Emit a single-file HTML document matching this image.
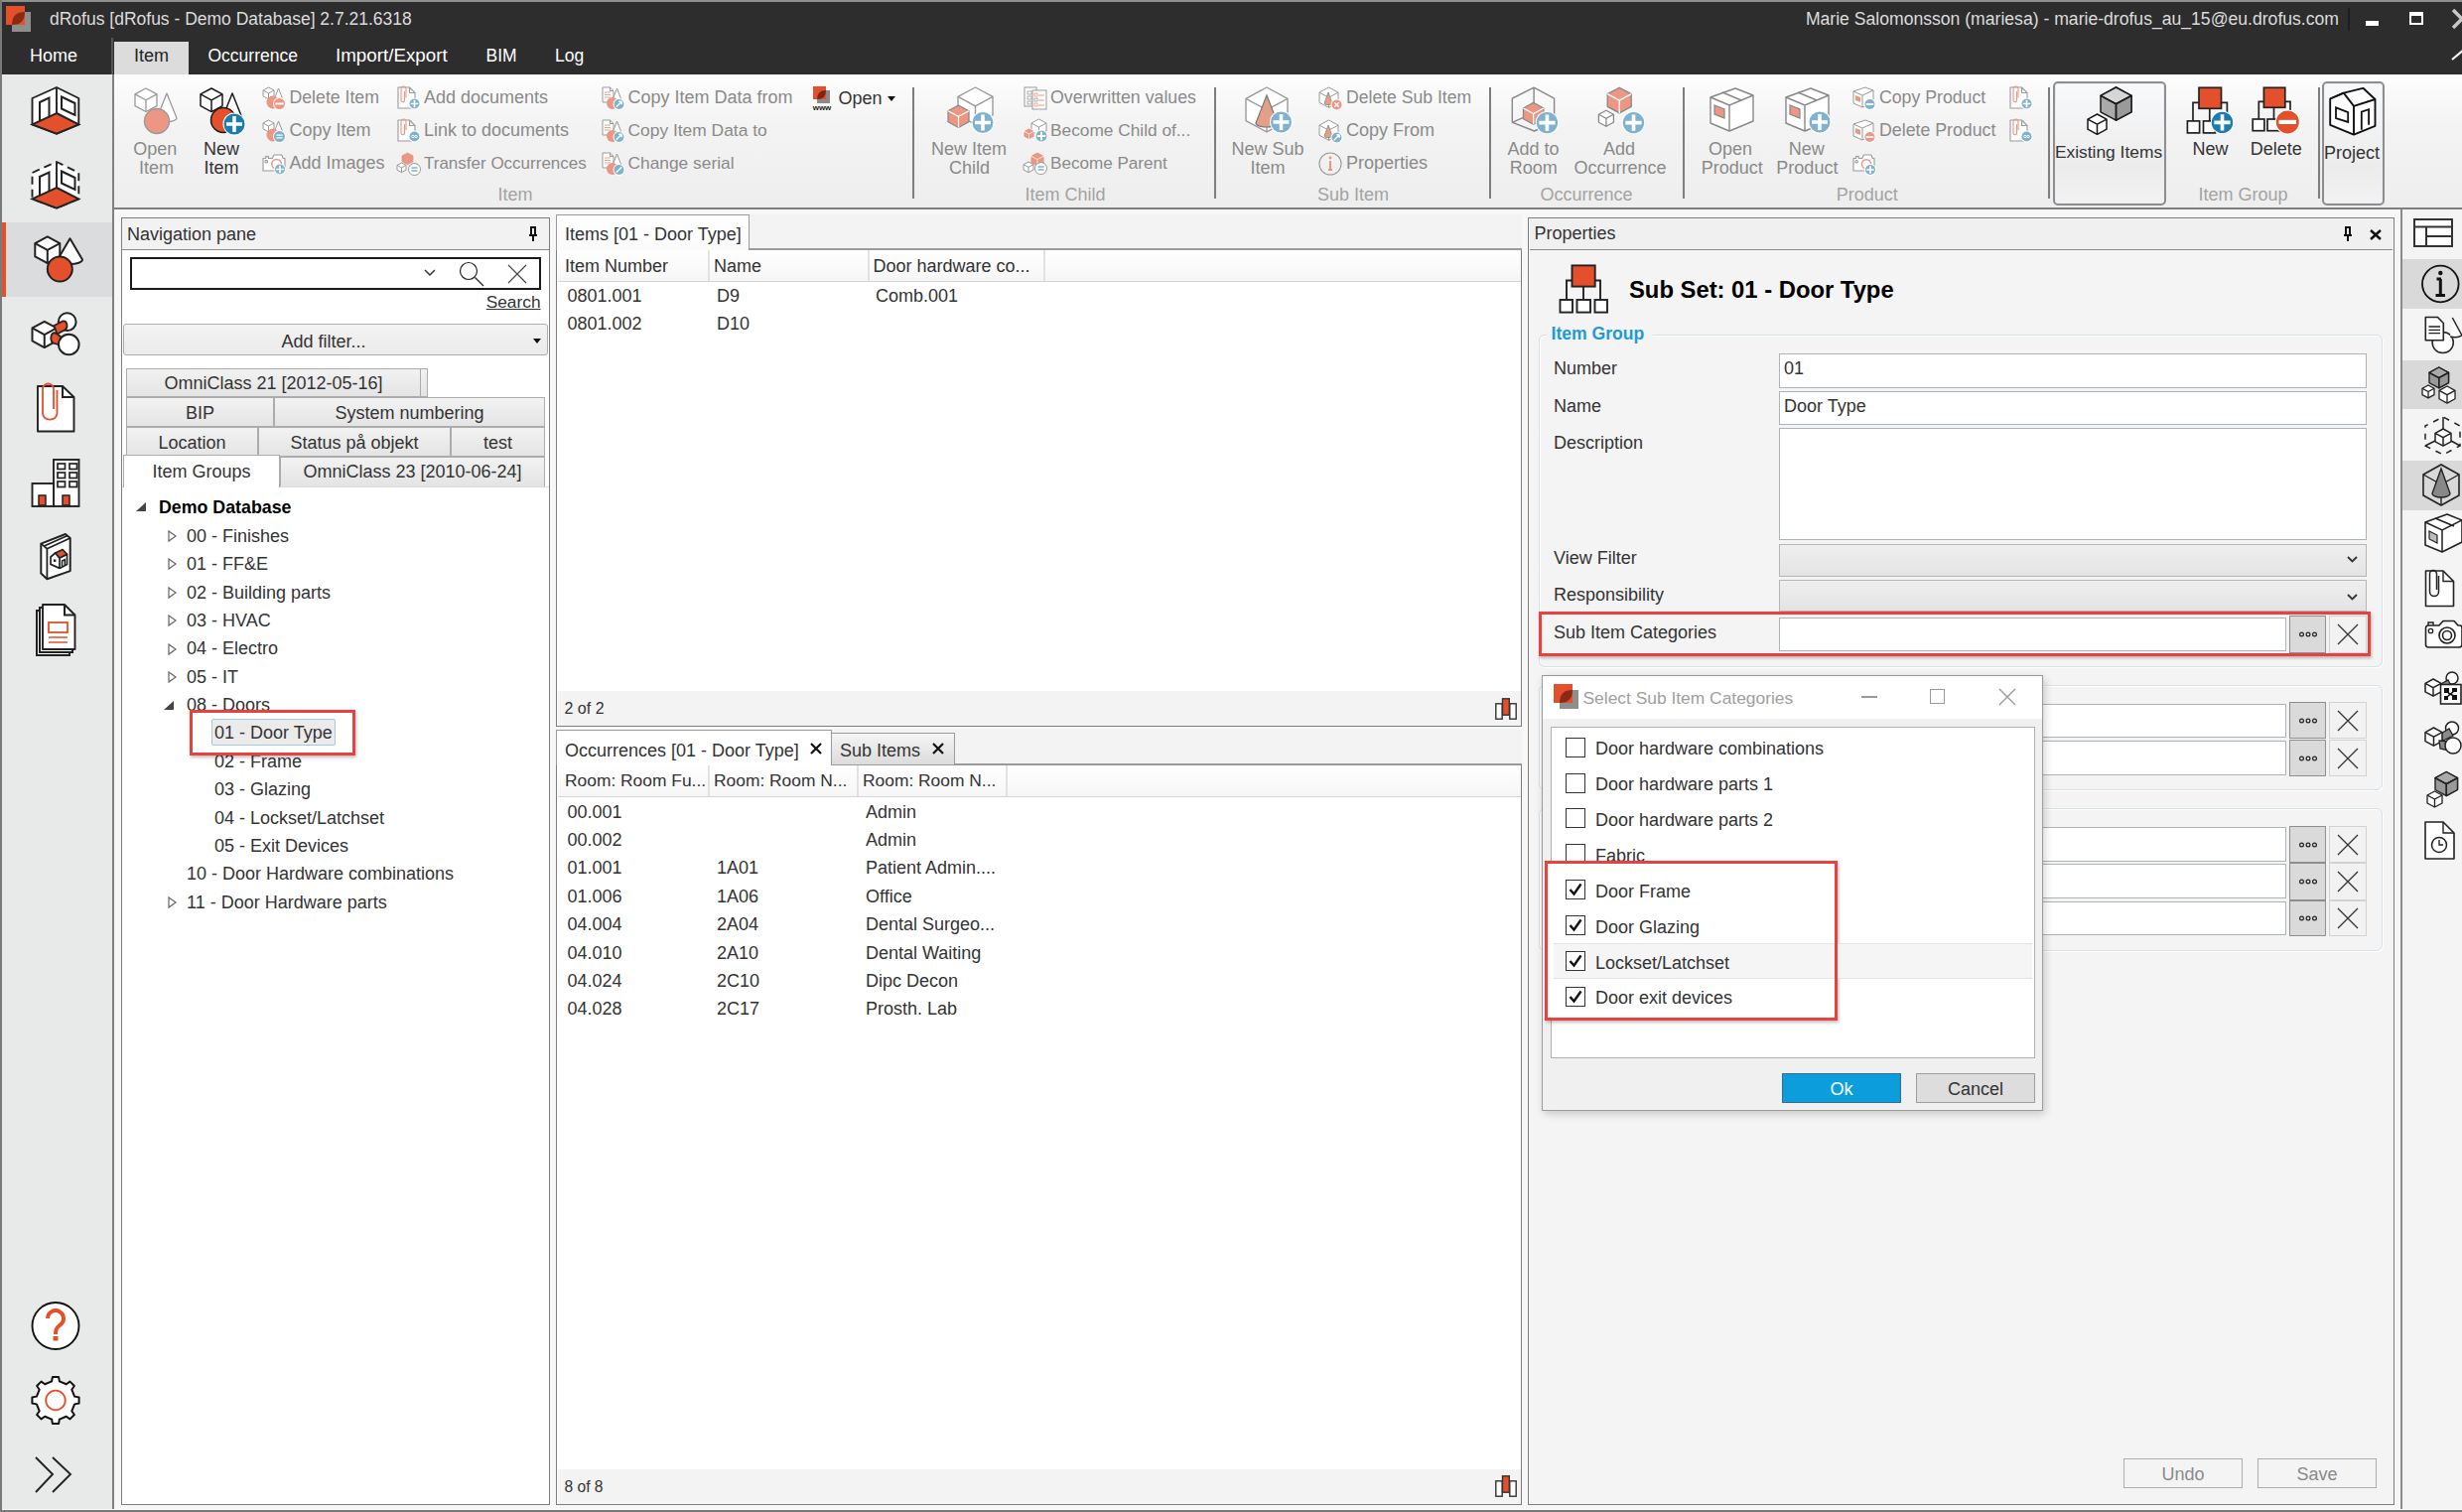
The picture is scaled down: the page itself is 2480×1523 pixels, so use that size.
<!DOCTYPE html><html><head><meta charset="utf-8"><style>
html,body{margin:0;padding:0;}
body{width:2480px;height:1523px;position:relative;overflow:hidden;background:#f7f7f7;font-family:"Liberation Sans",sans-serif;}
.t{position:absolute;white-space:pre;font-family:"Liberation Sans",sans-serif;}
.r{position:absolute;box-sizing:border-box;}
svg.r{overflow:visible;}
</style></head><body>
<div class="r" style="left:0px;top:0px;width:2480px;height:75px;background:#2d2d2d;"></div>
<div class="r" style="left:0px;top:0px;width:2480px;height:2px;background:#8f8f8f;"></div>
<div class="r" style="left:0px;top:0px;width:2px;height:1523px;background:#7a7a7a;"></div>
<div class="r" style="left:0px;top:1521px;width:2480px;height:2px;background:#7a7a7a;"></div>
<div class="r" style="left:12px;top:12px;width:19px;height:20px;background:#8e8e8e;"></div>
<div class="r" style="left:6px;top:6px;width:19px;height:19px;background:#e4502b;"></div>
<svg class="r" style="left:12px;top:12px" width="13" height="13" viewBox="0 0 13 13"><path d="M0 13 Q0 0 13 0 Q13 13 0 13 Z" fill="#8a2a14"/></svg>
<div class="t" style="left:50.0px;top:10.2px;font-size:17.5px;line-height:19.55px;color:#dcdcdc;font-weight:400;">dRofus [dRofus - Demo Database] 2.7.21.6318</div>
<div class="t" style="left:1356.0px;width:1000px;text-align:right;top:10.1px;font-size:17.6px;line-height:19.66px;color:#dcdcdc;font-weight:400;">Marie Salomonsson (mariesa) - marie-drofus_au_15@eu.drofus.com</div>
<div class="r" style="left:2365px;top:8px;width:2px;height:23px;background:#1f1f1f;"></div>
<div class="r" style="left:2383px;top:21px;width:13px;height:5px;background:#fff;"></div>
<div class="r" style="left:2427px;top:12px;width:14px;height:13px;border:2px solid #fff;border-top-width:4px;"></div>
<svg class="r" style="left:2470px;top:10px" width="20" height="18" viewBox="0 0 20 18"><path d="M1 0 L10 9 L1 18" stroke="#c8c8c8" stroke-width="3.5" fill="none"/></svg>
<svg class="r" style="left:2468px;top:48px" width="14" height="14" viewBox="0 0 14 14"><path d="M2 12 L14 2" stroke="#fff" stroke-width="2"/></svg>
<div class="r" style="left:112px;top:38px;width:2px;height:37px;background:#555;"></div>
<div class="r" style="left:115px;top:42px;width:75px;height:33px;background:#dcdcdc;"></div>
<div class="t" style="left:30.0px;top:46.1px;font-size:18px;line-height:20.11px;color:#fff;font-weight:400;">Home</div>
<div class="t" style="left:135.0px;top:46.1px;font-size:18px;line-height:20.11px;color:#222;font-weight:400;">Item</div>
<div class="t" style="left:209.5px;top:46.6px;font-size:17.5px;line-height:19.55px;color:#fff;font-weight:400;">Occurrence</div>
<div class="t" style="left:338.0px;top:45.4px;font-size:18.8px;line-height:21.00px;color:#fff;font-weight:400;">Import/Export</div>
<div class="t" style="left:489.5px;top:46.6px;font-size:17.5px;line-height:19.55px;color:#fff;font-weight:400;">BIM</div>
<div class="t" style="left:559.0px;top:46.6px;font-size:17.5px;line-height:19.55px;color:#fff;font-weight:400;">Log</div>
<div class="r" style="left:114px;top:75px;width:2366px;height:134px;background:linear-gradient(#fdfdfd,#f3f3f3 40%,#eeeeee);"></div>
<div class="r" style="left:114px;top:209px;width:2366px;height:2px;background:#7f7f7f;"></div>
<div class="r" style="left:919px;top:88px;width:2px;height:112px;background:#7d7d7d;"></div>
<div class="r" style="left:1223px;top:88px;width:2px;height:112px;background:#7d7d7d;"></div>
<div class="r" style="left:1500px;top:88px;width:2px;height:112px;background:#7d7d7d;"></div>
<div class="r" style="left:1695px;top:88px;width:2px;height:112px;background:#7d7d7d;"></div>
<div class="r" style="left:2063px;top:88px;width:2px;height:112px;background:#7d7d7d;"></div>
<div class="r" style="left:2335px;top:88px;width:2px;height:112px;background:#7d7d7d;"></div>
<svg class="r" style="left:134px;top:87px" width="50" height="50" viewBox="0 0 50 50"><polygon points="13.00,2.00 24.00,7.94 24.00,19.60 13.00,25.54 2.00,19.60 2.00,7.94" fill="#fff" stroke="#9a9a9a" stroke-width="1.3" stroke-linejoin="round"/><path d="M2.00 7.94 L13.00 13.88 L24.00 7.94 M13.00 13.88 L13.00 25.54" fill="none" stroke="#9a9a9a" stroke-width="1.3"/><path d="M34.0 7 L44 32.0 A10.0 3.5999999999999996 0 0 1 24 32.0 Z" fill="#fff" stroke="#9a9a9a" stroke-width="1.3" stroke-linejoin="round"/><circle cx="24" cy="35" r="12.5" fill="#ec9683" stroke="#9a9a9a" stroke-width="1.4"/></svg>
<div class="t" style="left:-343.7px;width:1000px;text-align:center;top:139.7px;font-size:18px;line-height:20.11px;color:#8a8a8a;font-weight:400;">Open</div>
<div class="t" style="left:-342.5px;width:1000px;text-align:center;top:159.2px;font-size:18px;line-height:20.11px;color:#8a8a8a;font-weight:400;">Item</div>
<svg class="r" style="left:200px;top:87px" width="50" height="50" viewBox="0 0 50 50"><polygon points="13.00,2.00 24.00,7.94 24.00,19.60 13.00,25.54 2.00,19.60 2.00,7.94" fill="#fff" stroke="#1a1a1a" stroke-width="1.5" stroke-linejoin="round"/><path d="M2.00 7.94 L13.00 13.88 L24.00 7.94 M13.00 13.88 L13.00 25.54" fill="none" stroke="#1a1a1a" stroke-width="1.5"/><path d="M34.0 7 L44 32.0 A10.0 3.5999999999999996 0 0 1 24 32.0 Z" fill="#fff" stroke="#1a1a1a" stroke-width="1.5" stroke-linejoin="round"/><circle cx="25" cy="34" r="12.5" fill="#e4502b" stroke="#1a1a1a" stroke-width="1.5"/><circle cx="36" cy="38" r="11.5" fill="#fff"/><circle cx="36" cy="38" r="10.5" fill="#1a7db0"/><path d="M28.02 38 H43.980000000000004 M36 30.02 V45.980000000000004" stroke="#fff" stroke-width="3.5700000000000003"/></svg>
<div class="t" style="left:-277.0px;width:1000px;text-align:center;top:139.7px;font-size:18px;line-height:20.11px;color:#333;font-weight:400;">New</div>
<div class="t" style="left:-277.0px;width:1000px;text-align:center;top:159.2px;font-size:18px;line-height:20.11px;color:#333;font-weight:400;">Item</div>
<svg class="r" style="left:264px;top:87px" width="24" height="24" viewBox="0 0 24 24"><polygon points="6.50,1.00 12.00,3.97 12.00,9.80 6.50,12.77 1.00,9.80 1.00,3.97" fill="#fff" stroke="#9a9a9a" stroke-width="1" stroke-linejoin="round"/><path d="M1.00 3.97 L6.50 6.94 L12.00 3.97 M6.50 6.94 L6.50 12.77" fill="none" stroke="#9a9a9a" stroke-width="1"/><path d="M16.5 2 L21 13.65 A4.5 1.6199999999999999 0 0 1 12 13.65 Z" fill="#fff" stroke="#9a9a9a" stroke-width="1" stroke-linejoin="round"/><circle cx="11" cy="16" r="6.5" fill="#ec9683" stroke="none" stroke-width="1.2"/><circle cx="17.5" cy="17.5" r="6.5" fill="#fff"/><circle cx="17.5" cy="17.5" r="5.5" fill="#ec9683"/><path d="M13.32 17.5 H21.68" stroke="#fff" stroke-width="1.98"/></svg>
<div class="t" style="left:291.5px;top:88.6px;font-size:17.7px;line-height:19.77px;color:#8a8a8a;font-weight:400;">Delete Item</div>
<svg class="r" style="left:264px;top:120px" width="24" height="24" viewBox="0 0 24 24"><polygon points="6.50,1.00 12.00,3.97 12.00,9.80 6.50,12.77 1.00,9.80 1.00,3.97" fill="#fff" stroke="#9a9a9a" stroke-width="1" stroke-linejoin="round"/><path d="M1.00 3.97 L6.50 6.94 L12.00 3.97 M6.50 6.94 L6.50 12.77" fill="none" stroke="#9a9a9a" stroke-width="1"/><path d="M16.5 2 L21 13.65 A4.5 1.6199999999999999 0 0 1 12 13.65 Z" fill="#fff" stroke="#9a9a9a" stroke-width="1" stroke-linejoin="round"/><circle cx="11" cy="16" r="6.5" fill="#ec9683" stroke="none" stroke-width="1.2"/><circle cx="17.5" cy="17.5" r="6.5" fill="#fff"/><circle cx="17.5" cy="17.5" r="5.5" fill="#7fb2cf"/><path d="M14.475 16.125 H20.525 M14.475 18.875 H20.525" stroke="#fff" stroke-width="1.2539999999999998"/></svg>
<div class="t" style="left:291.5px;top:121.3px;font-size:18px;line-height:20.11px;color:#8a8a8a;font-weight:400;">Copy Item</div>
<svg class="r" style="left:264px;top:154px" width="24" height="22" viewBox="0 0 24 22"><path d="M1 5.52 H3.6399999999999997 V3.6 H6.5 V5.52 H10.24 L12.0 2 H19.7 L21.240000000000002 5.52 H23 V18 H1 Z" fill="#fff" stroke="#9a9a9a" stroke-width="1.1" stroke-linejoin="round"/><circle cx="4.3" cy="8.719999999999999" r="1.3199999999999998" fill="none" stroke="#9a9a9a" stroke-width="1.1"/><circle cx="14.64" cy="11.28" r="4.84" fill="none" stroke="#ec9683" stroke-width="1.54"/><circle cx="18" cy="16.5" r="6" fill="#fff"/><circle cx="18" cy="16.5" r="5" fill="#7fb2cf"/><path d="M14.2 16.5 H21.8 M18 12.7 V20.3" stroke="#fff" stroke-width="1.7000000000000002"/></svg>
<div class="t" style="left:291.5px;top:154.3px;font-size:18px;line-height:20.11px;color:#8a8a8a;font-weight:400;">Add Images</div>
<svg class="r" style="left:400px;top:87px" width="24" height="24" viewBox="0 0 24 24"><path d="M1 1 H12.559999999999999 L18 6.44 V22 H1 Z M12.559999999999999 1 V6.44 H18" fill="#fff" stroke="#9a9a9a" stroke-width="1.1" stroke-linejoin="round"/><path d="M7.5 4.8999999999999995 V14 A1.75 1.75 0 0 1 4 14 V2.5 A2.5 2.5 0 0 1 9 2.5 V11.200000000000001" fill="none" stroke="#ec9683" stroke-width="1.1"/><circle cx="17.5" cy="17.5" r="6" fill="#fff"/><circle cx="17.5" cy="17.5" r="5" fill="#7fb2cf"/><path d="M13.7 17.5 H21.3 M17.5 13.7 V21.3" stroke="#fff" stroke-width="1.7000000000000002"/></svg>
<div class="t" style="left:427.0px;top:88.3px;font-size:18px;line-height:20.11px;color:#8a8a8a;font-weight:400;">Add documents</div>
<svg class="r" style="left:400px;top:120px" width="24" height="24" viewBox="0 0 24 24"><path d="M1 1 H12.559999999999999 L18 6.44 V22 H1 Z M12.559999999999999 1 V6.44 H18" fill="#fff" stroke="#9a9a9a" stroke-width="1.1" stroke-linejoin="round"/><path d="M7.5 4.8999999999999995 V14 A1.75 1.75 0 0 1 4 14 V2.5 A2.5 2.5 0 0 1 9 2.5 V11.200000000000001" fill="none" stroke="#ec9683" stroke-width="1.1"/><circle cx="17.5" cy="17.5" r="6" fill="#fff"/><circle cx="17.5" cy="17.5" r="5" fill="#7fb2cf"/><ellipse cx="15.9875" cy="17.5" rx="1.375" ry="1.1" fill="none" stroke="#fff" stroke-width="0.855"/><ellipse cx="19.0125" cy="17.5" rx="1.375" ry="1.1" fill="none" stroke="#fff" stroke-width="0.855"/></svg>
<div class="t" style="left:427.0px;top:121.3px;font-size:18px;line-height:20.11px;color:#8a8a8a;font-weight:400;">Link to documents</div>
<svg class="r" style="left:400px;top:153px" width="24" height="24" viewBox="0 0 24 24"><polygon points="10.50,1.00 16.00,3.97 16.00,9.80 10.50,12.77 5.00,9.80 5.00,3.97" fill="#ec9683" stroke="#ec9683" stroke-width="0.8" stroke-linejoin="round"/><path d="M5.00 3.97 L10.50 6.94 L16.00 3.97 M10.50 6.94 L10.50 12.77" fill="none" stroke="#ec9683" stroke-width="0.8"/><polygon points="4.50,11.00 9.00,13.43 9.00,18.20 4.50,20.63 0.00,18.20 0.00,13.43" fill="#fff" stroke="#9a9a9a" stroke-width="1" stroke-linejoin="round"/><path d="M0.00 13.43 L4.50 15.86 L9.00 13.43 M4.50 15.86 L4.50 20.63" fill="none" stroke="#9a9a9a" stroke-width="1"/><circle cx="17.5" cy="17.5" r="6.5" fill="#9a9a9a"/><circle cx="17.5" cy="17.5" r="5.5" fill="#fff"/><path d="M14.475 16.44125 H20.525 M20.525 18.55875 H14.475" stroke="#fff" stroke-width="1.045"/><path d="M14.5 16 H20.5 M20.5 19 H14.5" stroke="#7fb2cf" stroke-width="1.4"/></svg>
<div class="t" style="left:427.0px;top:155.2px;font-size:17.0px;line-height:18.99px;color:#8a8a8a;font-weight:400;">Transfer Occurrences</div>
<svg class="r" style="left:606px;top:87px" width="24" height="24" viewBox="0 0 24 24"><path d="M1 1 H8.48 L12 4.52 V16 H1 Z M8.48 1 V4.52 H12" fill="#fff" stroke="#9a9a9a" stroke-width="1" stroke-linejoin="round"/><path d="M3 6.0 H9" stroke="#ec9683" stroke-width="0.9"/><path d="M3 8.5 H9" stroke="#ec9683" stroke-width="0.9"/><path d="M3 11.0 H9" stroke="#ec9683" stroke-width="0.9"/><path d="M15.5 2 L20 13.65 A4.5 1.6199999999999999 0 0 1 11 13.65 Z" fill="#fff" stroke="#9a9a9a" stroke-width="1" stroke-linejoin="round"/><circle cx="11" cy="17" r="6" fill="#ec9683" stroke="none" stroke-width="1.2"/><circle cx="17.5" cy="18" r="6" fill="#fff"/><circle cx="17.5" cy="18" r="5" fill="#7fb2cf"/><path d="M14.75 20.75 L20.25 15.25 M20.25 15.25 H17.225 M20.25 15.25 V18.275" stroke="#fff" stroke-width="1.3299999999999998"/></svg>
<div class="t" style="left:632.5px;top:88.3px;font-size:18px;line-height:20.11px;color:#8a8a8a;font-weight:400;">Copy Item Data from</div>
<svg class="r" style="left:606px;top:120px" width="24" height="24" viewBox="0 0 24 24"><path d="M1 1 H8.48 L12 4.52 V16 H1 Z M8.48 1 V4.52 H12" fill="#fff" stroke="#9a9a9a" stroke-width="1" stroke-linejoin="round"/><path d="M3 6.0 H9" stroke="#ec9683" stroke-width="0.9"/><path d="M3 8.5 H9" stroke="#ec9683" stroke-width="0.9"/><path d="M3 11.0 H9" stroke="#ec9683" stroke-width="0.9"/><path d="M15.5 2 L20 13.65 A4.5 1.6199999999999999 0 0 1 11 13.65 Z" fill="#fff" stroke="#9a9a9a" stroke-width="1" stroke-linejoin="round"/><circle cx="11" cy="17" r="6" fill="#ec9683" stroke="none" stroke-width="1.2"/><circle cx="17.5" cy="18" r="6" fill="#fff"/><circle cx="17.5" cy="18" r="5" fill="#7fb2cf"/><path d="M14.75 20.75 L20.25 15.25 M20.25 15.25 H17.225 M20.25 15.25 V18.275" stroke="#fff" stroke-width="1.3299999999999998"/></svg>
<div class="t" style="left:632.5px;top:121.9px;font-size:17.4px;line-height:19.44px;color:#8a8a8a;font-weight:400;">Copy Item Data to</div>
<svg class="r" style="left:606px;top:153px" width="24" height="24" viewBox="0 0 24 24"><path d="M1 1 H8.48 L12 4.52 V16 H1 Z M8.48 1 V4.52 H12" fill="#fff" stroke="#9a9a9a" stroke-width="1" stroke-linejoin="round"/><path d="M3 6.0 H9" stroke="#ec9683" stroke-width="0.9"/><path d="M3 8.5 H9" stroke="#ec9683" stroke-width="0.9"/><path d="M3 11.0 H9" stroke="#ec9683" stroke-width="0.9"/><path d="M15.5 2 L20 13.65 A4.5 1.6199999999999999 0 0 1 11 13.65 Z" fill="#fff" stroke="#9a9a9a" stroke-width="1" stroke-linejoin="round"/><circle cx="11" cy="17" r="6" fill="#ec9683" stroke="none" stroke-width="1.2"/><circle cx="17.5" cy="18" r="6" fill="#fff"/><circle cx="17.5" cy="18" r="5" fill="#7fb2cf"/><path d="M14.75 20.75 L20.25 15.25" stroke="#fff" stroke-width="1.52"/></svg>
<div class="t" style="left:632.5px;top:154.9px;font-size:17.35px;line-height:19.38px;color:#8a8a8a;font-weight:400;">Change serial</div>
<svg class="r" style="left:817px;top:86px" width="24" height="26" viewBox="0 0 24 26"><rect x="6" y="5" width="13" height="13" fill="#8a8a8a"/><rect x="2" y="1" width="13" height="13" fill="#e4502b"/><path d="M6 14 Q6 5 15 5 Q15 14 6 14 Z" fill="#7a2615"/><text x="11" y="25" font-family="Liberation Sans" font-size="8" font-weight="700" text-anchor="middle" fill="#222">www</text></svg>
<div class="t" style="left:844.4px;top:88.5px;font-size:18px;line-height:20.11px;color:#333;font-weight:400;">Open</div>
<svg class="r" style="left:894px;top:97px" width="8" height="5" viewBox="0 0 8 5"><path d="M0 0 H8 L4 5 Z" fill="#111"/></svg>
<div class="t" style="left:19.0px;width:1000px;text-align:center;top:186.4px;font-size:18px;line-height:20.11px;color:#a3a3a3;font-weight:400;">Item</div>
<svg class="r" style="left:953px;top:86px" width="50" height="46" viewBox="0 0 50 46"><polygon points="29.50,2.00 47.00,11.45 47.00,30.00 29.50,39.45 12.00,30.00 12.00,11.45" fill="#fff" stroke="#9a9a9a" stroke-width="1.4" stroke-linejoin="round"/><path d="M12.00 11.45 L29.50 20.90 L47.00 11.45 M29.50 20.90 L29.50 39.45" fill="none" stroke="#9a9a9a" stroke-width="1.4"/><polygon points="12.50,20.00 23.00,25.67 23.00,36.80 12.50,42.47 2.00,36.80 2.00,25.67" fill="#ec9683" stroke="#888" stroke-width="1.2" stroke-linejoin="round"/><path d="M2.00 25.67 L12.50 31.34 L23.00 25.67 M12.50 31.34 L12.50 42.47" fill="none" stroke="#fff" stroke-width="1.2"/><circle cx="37" cy="37.5" r="11.5" fill="#fff"/><circle cx="37" cy="37.5" r="10.5" fill="#7fb2cf"/><path d="M29.02 37.5 H44.980000000000004 M37 29.52 V45.480000000000004" stroke="#fff" stroke-width="3.5700000000000003"/></svg>
<div class="t" style="left:476.0px;width:1000px;text-align:center;top:139.7px;font-size:18px;line-height:20.11px;color:#8a8a8a;font-weight:400;">New Item</div>
<div class="t" style="left:476.5px;width:1000px;text-align:center;top:159.2px;font-size:18px;line-height:20.11px;color:#8a8a8a;font-weight:400;">Child</div>
<svg class="r" style="left:1031px;top:87px" width="24" height="24" viewBox="0 0 24 24"><rect x="1" y="1" width="12" height="19" fill="#fff" stroke="#9a9a9a" stroke-width="1"/><rect x="9" y="4" width="14" height="19" fill="#fff" stroke="#9a9a9a" stroke-width="1"/><path d="M15 9 H21" stroke="#ec9683" stroke-width="1"/><path d="M15 14 H21" stroke="#ec9683" stroke-width="1"/><path d="M15 19 H21" stroke="#ec9683" stroke-width="1"/><rect x="11" y="7" width="3" height="3" fill="none" stroke="#ec9683" stroke-width="0.8"/><rect x="11" y="12" width="3" height="3" fill="none" stroke="#9a9a9a" stroke-width="0.8"/><rect x="11" y="17" width="3" height="3" fill="none" stroke="#ec9683" stroke-width="0.8"/><rect x="4" y="5" width="4" height="3" fill="none" stroke="#9a9a9a" stroke-width="0.8"/><rect x="4" y="10" width="4" height="3" fill="none" stroke="#9a9a9a" stroke-width="0.8"/><rect x="4" y="15" width="4" height="3" fill="none" stroke="#9a9a9a" stroke-width="0.8"/></svg>
<div class="t" style="left:1058.0px;top:88.5px;font-size:17.75px;line-height:19.83px;color:#8a8a8a;font-weight:400;">Overwritten values</div>
<svg class="r" style="left:1031px;top:119px" width="24" height="24" viewBox="0 0 24 24"><polygon points="15.50,1.00 23.00,5.05 23.00,13.00 15.50,17.05 8.00,13.00 8.00,5.05" fill="#fff" stroke="#9a9a9a" stroke-width="1" stroke-linejoin="round"/><path d="M8.00 5.05 L15.50 9.10 L23.00 5.05 M15.50 9.10 L15.50 17.05" fill="none" stroke="#9a9a9a" stroke-width="1"/><polygon points="5.50,10.00 11.00,12.97 11.00,18.80 5.50,21.77 0.00,18.80 0.00,12.97" fill="#ec9683" stroke="#fff" stroke-width="0.8" stroke-linejoin="round"/><path d="M0.00 12.97 L5.50 15.94 L11.00 12.97 M5.50 15.94 L5.50 21.77" fill="none" stroke="#fff" stroke-width="0.8"/><circle cx="18" cy="18" r="6.5" fill="#fff"/><circle cx="18" cy="18" r="5.5" fill="#7fb2cf"/><path d="M13.82 18 H22.18 M18 13.82 V22.18" stroke="#fff" stroke-width="1.87"/></svg>
<div class="t" style="left:1058.0px;top:121.9px;font-size:17.3px;line-height:19.32px;color:#8a8a8a;font-weight:400;">Become Child of...</div>
<svg class="r" style="left:1031px;top:152px" width="24" height="24" viewBox="0 0 24 24"><polygon points="14.00,1.00 21.00,4.78 21.00,12.20 14.00,15.98 7.00,12.20 7.00,4.78" fill="#ec9683" stroke="#fff" stroke-width="0.8" stroke-linejoin="round"/><path d="M7.00 4.78 L14.00 8.56 L21.00 4.78 M14.00 8.56 L14.00 15.98" fill="none" stroke="#fff" stroke-width="0.8"/><polygon points="5.00,11.00 10.00,13.70 10.00,19.00 5.00,21.70 0.00,19.00 0.00,13.70" fill="#fff" stroke="#9a9a9a" stroke-width="1" stroke-linejoin="round"/><path d="M0.00 13.70 L5.00 16.40 L10.00 13.70 M5.00 16.40 L5.00 21.70" fill="none" stroke="#9a9a9a" stroke-width="1"/><circle cx="17.5" cy="17.5" r="6.5" fill="#9a9a9a"/><circle cx="17.5" cy="17.5" r="5.5" fill="#fff"/><path d="M14.475 16.44125 H20.525 M20.525 18.55875 H14.475" stroke="#fff" stroke-width="1.045"/><path d="M14.5 16 H20.5 M20.5 19 H14.5" stroke="#7fb2cf" stroke-width="1.4"/></svg>
<div class="t" style="left:1058.0px;top:155.1px;font-size:17.1px;line-height:19.10px;color:#8a8a8a;font-weight:400;">Become Parent</div>
<div class="t" style="left:573.0px;width:1000px;text-align:center;top:186.4px;font-size:18px;line-height:20.11px;color:#a3a3a3;font-weight:400;">Item Child</div>
<svg class="r" style="left:1254px;top:86px" width="50" height="48" viewBox="0 0 50 48"><polygon points="22.00,2.00 43.00,13.34 43.00,35.60 22.00,46.94 1.00,35.60 1.00,13.34" fill="#fff" stroke="#9a9a9a" stroke-width="1.4" stroke-linejoin="round"/><path d="M1.00 13.34 L22.00 24.68 L43.00 13.34 M22.00 24.68 L22.00 46.94" fill="none" stroke="#9a9a9a" stroke-width="1.4"/><path d="M22 10 L33 38 A11 4 0 0 1 11 38 Z" fill="#e3a087" stroke="#777" stroke-width="1.2"/><circle cx="36.5" cy="37" r="11.5" fill="#fff"/><circle cx="36.5" cy="37" r="10.5" fill="#7fb2cf"/><path d="M28.52 37 H44.480000000000004 M36.5 29.02 V44.980000000000004" stroke="#fff" stroke-width="3.5700000000000003"/></svg>
<div class="t" style="left:777.0px;width:1000px;text-align:center;top:139.7px;font-size:18px;line-height:20.11px;color:#8a8a8a;font-weight:400;">New Sub</div>
<div class="t" style="left:777.0px;width:1000px;text-align:center;top:159.2px;font-size:18px;line-height:20.11px;color:#8a8a8a;font-weight:400;">Item</div>
<svg class="r" style="left:1328px;top:87px" width="24" height="24" viewBox="0 0 24 24"><polygon points="10.50,1.00 20.00,6.13 20.00,16.20 10.50,21.33 1.00,16.20 1.00,6.13" fill="#fff" stroke="#9a9a9a" stroke-width="1" stroke-linejoin="round"/><path d="M1.00 6.13 L10.50 11.26 L20.00 6.13 M10.50 11.26 L10.50 21.33" fill="none" stroke="#9a9a9a" stroke-width="1"/><path d="M10 6 L14 17 A4 1.6 0 0 1 6 17 Z" fill="#e3a087" stroke="#888" stroke-width="0.8"/><circle cx="18.5" cy="18.5" r="6" fill="#fff"/><circle cx="18.5" cy="18.5" r="5" fill="#ec9683"/><path d="M16.3 16.3 L20.7 20.7 M20.7 16.3 L16.3 20.7" stroke="#fff" stroke-width="1.3299999999999998"/></svg>
<div class="t" style="left:1356.0px;top:88.7px;font-size:17.6px;line-height:19.66px;color:#8a8a8a;font-weight:400;">Delete Sub Item</div>
<svg class="r" style="left:1328px;top:120px" width="24" height="24" viewBox="0 0 24 24"><polygon points="10.50,1.00 20.00,6.13 20.00,16.20 10.50,21.33 1.00,16.20 1.00,6.13" fill="#fff" stroke="#9a9a9a" stroke-width="1" stroke-linejoin="round"/><path d="M1.00 6.13 L10.50 11.26 L20.00 6.13 M10.50 11.26 L10.50 21.33" fill="none" stroke="#9a9a9a" stroke-width="1"/><path d="M10 6 L14 17 A4 1.6 0 0 1 6 17 Z" fill="#e3a087" stroke="#888" stroke-width="0.8"/><circle cx="18.5" cy="18.5" r="6" fill="#fff"/><circle cx="18.5" cy="18.5" r="5" fill="#7fb2cf"/><path d="M15.75 21.25 L21.25 15.75 M21.25 15.75 H18.225 M21.25 15.75 V18.775" stroke="#fff" stroke-width="1.3299999999999998"/></svg>
<div class="t" style="left:1356.0px;top:121.3px;font-size:18px;line-height:20.11px;color:#8a8a8a;font-weight:400;">Copy From</div>
<svg class="r" style="left:1328px;top:153px" width="24" height="24" viewBox="0 0 24 24"><circle cx="12" cy="12" r="11" fill="none" stroke="#999" stroke-width="1.1"/><path d="M12 9 V18 M10 18 H14" stroke="#ec9683" stroke-width="2"/><circle cx="12" cy="6" r="1.4" fill="#ec9683"/></svg>
<div class="t" style="left:1356.0px;top:154.3px;font-size:18px;line-height:20.11px;color:#8a8a8a;font-weight:400;">Properties</div>
<div class="t" style="left:863.0px;width:1000px;text-align:center;top:186.4px;font-size:18px;line-height:20.11px;color:#a3a3a3;font-weight:400;">Sub Item</div>
<svg class="r" style="left:0px;top:0px" width="2480" height="200" viewBox="0 0 2480 200"><path d="M1545.1 103.4 V88.2 L1565.6 99.2 V118 M1545.1 88.2 L1523.3 99.2 V123.3 L1545.5 132 L1550 130 M1523.3 123.3 L1534 118.7" fill="none" stroke="#888" stroke-width="1.4" stroke-linejoin="round"/><polygon points="1544.65,103.40 1554.90,108.94 1554.90,119.80 1544.65,125.34 1534.40,119.80 1534.40,108.94" fill="#ec9683" stroke="#888" stroke-width="1.2" stroke-linejoin="round"/><path d="M1534.40 108.94 L1544.65 114.47 L1554.90 108.94 M1544.65 114.47 L1544.65 125.34" fill="none" stroke="#fff" stroke-width="1.2"/><circle cx="1558.4" cy="123.6" r="11.7" fill="#fff"/><circle cx="1558.4" cy="123.6" r="10.7" fill="#7fb2cf"/><path d="M1550.268 123.6 H1566.5320000000002 M1558.4 115.46799999999999 V131.732" stroke="#fff" stroke-width="3.638"/></svg>
<div class="t" style="left:1044.5px;width:1000px;text-align:center;top:139.7px;font-size:18px;line-height:20.11px;color:#8a8a8a;font-weight:400;">Add to</div>
<div class="t" style="left:1044.7px;width:1000px;text-align:center;top:159.2px;font-size:18px;line-height:20.11px;color:#8a8a8a;font-weight:400;">Room</div>
<svg class="r" style="left:0px;top:0px" width="2480" height="200" viewBox="0 0 2480 200"><polygon points="1631.20,88.20 1643.20,94.68 1643.20,107.40 1631.20,113.88 1619.20,107.40 1619.20,94.68" fill="#ec9683" stroke="#888" stroke-width="1.3" stroke-linejoin="round"/><path d="M1619.20 94.68 L1631.20 101.16 L1643.20 94.68 M1631.20 101.16 L1631.20 113.88" fill="none" stroke="#fff" stroke-width="1.3"/><polygon points="1617.90,111.20 1625.40,115.25 1625.40,123.20 1617.90,127.25 1610.40,123.20 1610.40,115.25" fill="#fff" stroke="#888" stroke-width="1.3" stroke-linejoin="round"/><path d="M1610.40 115.25 L1617.90 119.30 L1625.40 115.25 M1617.90 119.30 L1617.90 127.25" fill="none" stroke="#888" stroke-width="1.3"/><circle cx="1645.5" cy="123.6" r="11.7" fill="#fff"/><circle cx="1645.5" cy="123.6" r="10.7" fill="#7fb2cf"/><path d="M1637.368 123.6 H1653.632 M1645.5 115.46799999999999 V131.732" stroke="#fff" stroke-width="3.638"/></svg>
<div class="t" style="left:1131.0px;width:1000px;text-align:center;top:139.7px;font-size:18px;line-height:20.11px;color:#8a8a8a;font-weight:400;">Add</div>
<div class="t" style="left:1132.0px;width:1000px;text-align:center;top:159.2px;font-size:18px;line-height:20.11px;color:#8a8a8a;font-weight:400;">Occurrence</div>
<div class="t" style="left:1098.0px;width:1000px;text-align:center;top:186.4px;font-size:18px;line-height:20.11px;color:#a3a3a3;font-weight:400;">Occurrence</div>
<svg class="r" style="left:1720px;top:86px" width="50" height="50" viewBox="0 0 50 50"><path d="M3 12 L28 3 L46 10 V36 L22 46 L3 38 Z" fill="#fff" stroke="#888" stroke-width="1.4" stroke-linejoin="round"/><path d="M3 12 L22 20 L46 10 M22 20 V46 M15 7 L34 15" stroke="#888" stroke-width="1.4" fill="none"/><path d="M7 20 L17 24 V33 L7 29 Z" fill="#ec9683" stroke="#888" stroke-width="1.2"/></svg>
<div class="t" style="left:1243.0px;width:1000px;text-align:center;top:139.7px;font-size:18px;line-height:20.11px;color:#8a8a8a;font-weight:400;">Open</div>
<div class="t" style="left:1244.7px;width:1000px;text-align:center;top:159.2px;font-size:18px;line-height:20.11px;color:#8a8a8a;font-weight:400;">Product</div>
<svg class="r" style="left:1796px;top:86px" width="50" height="50" viewBox="0 0 50 50"><path d="M3 12 L28 3 L46 10 V36 L22 46 L3 38 Z" fill="#fff" stroke="#888" stroke-width="1.4" stroke-linejoin="round"/><path d="M3 12 L22 20 L46 10 M22 20 V46 M15 7 L34 15" stroke="#888" stroke-width="1.4" fill="none"/><path d="M7 20 L17 24 V33 L7 29 Z" fill="#ec9683" stroke="#888" stroke-width="1.2"/><circle cx="37" cy="37" r="11.5" fill="#fff"/><circle cx="37" cy="37" r="10.5" fill="#7fb2cf"/><path d="M29.02 37 H44.980000000000004 M37 29.02 V44.980000000000004" stroke="#fff" stroke-width="3.5700000000000003"/></svg>
<div class="t" style="left:1319.7px;width:1000px;text-align:center;top:139.7px;font-size:18px;line-height:20.11px;color:#8a8a8a;font-weight:400;">New</div>
<div class="t" style="left:1320.4px;width:1000px;text-align:center;top:159.2px;font-size:18px;line-height:20.11px;color:#8a8a8a;font-weight:400;">Product</div>
<svg class="r" style="left:1866px;top:87px" width="24" height="24" viewBox="0 0 24 24"><path d="M1 5 L13 1 L21 4 V16 L10 21 L1 17 Z" fill="#fff" stroke="#999" stroke-width="1" stroke-linejoin="round"/><path d="M1 5 L10 9 L21 4 M10 9 V21" stroke="#999" stroke-width="1" fill="none"/><path d="M3 9 L8 11 V16 L3 14 Z" fill="#ec9683"/><circle cx="17.5" cy="18" r="6" fill="#fff"/><circle cx="17.5" cy="18" r="5" fill="#7fb2cf"/><path d="M13.7 18 H21.3" stroke="#fff" stroke-width="1.7999999999999998"/></svg>
<div class="t" style="left:1893.0px;top:88.6px;font-size:17.7px;line-height:19.77px;color:#8a8a8a;font-weight:400;">Copy Product</div>
<svg class="r" style="left:1866px;top:120px" width="24" height="24" viewBox="0 0 24 24"><path d="M1 5 L13 1 L21 4 V16 L10 21 L1 17 Z" fill="#fff" stroke="#999" stroke-width="1" stroke-linejoin="round"/><path d="M1 5 L10 9 L21 4 M10 9 V21" stroke="#999" stroke-width="1" fill="none"/><path d="M3 9 L8 11 V16 L3 14 Z" fill="#ec9683"/><circle cx="17.5" cy="18" r="6" fill="#fff"/><circle cx="17.5" cy="18" r="5" fill="#ec9683"/><path d="M13.7 18 H21.3" stroke="#fff" stroke-width="1.7999999999999998"/></svg>
<div class="t" style="left:1893.0px;top:121.5px;font-size:17.75px;line-height:19.83px;color:#8a8a8a;font-weight:400;">Delete Product</div>
<svg class="r" style="left:1866px;top:154px" width="24" height="24" viewBox="0 0 24 24"><path d="M1 5.52 H3.52 V3.6 H6.25 V5.52 H9.82 L11.5 2 H18.849999999999998 L20.32 5.52 H22 V18 H1 Z" fill="#fff" stroke="#9a9a9a" stroke-width="1.1" stroke-linejoin="round"/><circle cx="4.15" cy="8.719999999999999" r="1.26" fill="none" stroke="#9a9a9a" stroke-width="1.1"/><circle cx="14.02" cy="11.28" r="4.62" fill="none" stroke="#ec9683" stroke-width="1.54"/><circle cx="18" cy="17" r="6" fill="#fff"/><circle cx="18" cy="17" r="5" fill="#7fb2cf"/><path d="M14.2 17 H21.8 M18 13.2 V20.8" stroke="#fff" stroke-width="1.7000000000000002"/></svg>
<svg class="r" style="left:2024px;top:87px" width="24" height="24" viewBox="0 0 24 24"><path d="M1 1 H12.559999999999999 L18 6.44 V22 H1 Z M12.559999999999999 1 V6.44 H18" fill="#fff" stroke="#9a9a9a" stroke-width="1.1" stroke-linejoin="round"/><path d="M7.5 4.8999999999999995 V14 A1.75 1.75 0 0 1 4 14 V2.5 A2.5 2.5 0 0 1 9 2.5 V11.200000000000001" fill="none" stroke="#ec9683" stroke-width="1.1"/><circle cx="17.5" cy="17.5" r="6" fill="#fff"/><circle cx="17.5" cy="17.5" r="5" fill="#7fb2cf"/><path d="M13.7 17.5 H21.3 M17.5 13.7 V21.3" stroke="#fff" stroke-width="1.7000000000000002"/></svg>
<svg class="r" style="left:2024px;top:120px" width="24" height="24" viewBox="0 0 24 24"><path d="M1 1 H12.559999999999999 L18 6.44 V22 H1 Z M12.559999999999999 1 V6.44 H18" fill="#fff" stroke="#9a9a9a" stroke-width="1.1" stroke-linejoin="round"/><path d="M7.5 4.8999999999999995 V14 A1.75 1.75 0 0 1 4 14 V2.5 A2.5 2.5 0 0 1 9 2.5 V11.200000000000001" fill="none" stroke="#ec9683" stroke-width="1.1"/><circle cx="17.5" cy="17.5" r="6" fill="#fff"/><circle cx="17.5" cy="17.5" r="5" fill="#7fb2cf"/><ellipse cx="15.9875" cy="17.5" rx="1.375" ry="1.1" fill="none" stroke="#fff" stroke-width="0.855"/><ellipse cx="19.0125" cy="17.5" rx="1.375" ry="1.1" fill="none" stroke="#fff" stroke-width="0.855"/></svg>
<div class="t" style="left:1380.7px;width:1000px;text-align:center;top:186.4px;font-size:18px;line-height:20.11px;color:#a3a3a3;font-weight:400;">Product</div>
<div class="r" style="left:2068px;top:82px;width:114px;height:125px;border:2px solid #8e8e8e;border-radius:5px;background:linear-gradient(#f8f9fb,#ececec 70%,#f2f2f2);box-shadow:inset 0 0 0 1px #e8eef6;"></div>
<svg class="r" style="left:2102px;top:87px" width="48" height="50" viewBox="0 0 48 50"><polygon points="29.50,1.00 45.00,9.37 45.00,25.80 29.50,34.17 14.00,25.80 14.00,9.37" fill="#aaa" stroke="#1a1a1a" stroke-width="1.5" stroke-linejoin="round"/><polygon points="29.50,1.00 45.00,9.37 29.50,17.74 14.00,9.37" fill="#d6d6d6" stroke="#1a1a1a" stroke-width="1.5" stroke-linejoin="round"/><polygon points="29.50,17.74 45.00,9.37 45.00,25.80 29.50,34.17" fill="#9a9a9a" stroke="#1a1a1a" stroke-width="1.5" stroke-linejoin="round"/><path d="M14.00 9.37 L29.50 17.74 L45.00 9.37 M29.50 17.74 L29.50 34.17" fill="none" stroke="#1a1a1a" stroke-width="1.5"/><polygon points="10.50,28.00 20.00,33.13 20.00,43.20 10.50,48.33 1.00,43.20 1.00,33.13" fill="#fff" stroke="#1a1a1a" stroke-width="1.5" stroke-linejoin="round"/><path d="M1.00 33.13 L10.50 38.26 L20.00 33.13 M10.50 38.26 L10.50 48.33" fill="none" stroke="#1a1a1a" stroke-width="1.5"/></svg>
<div class="t" style="left:1624.0px;width:1000px;text-align:center;top:144.3px;font-size:17.4px;line-height:19.44px;color:#333;font-weight:400;">Existing Items</div>
<svg class="r" style="left:2202px;top:87px" width="50" height="50" viewBox="0 0 50 50"><path d="M7 35 V16.4 H41.4 V30 M23.8 22 V35" stroke="#222" stroke-width="1.7" fill="none"/><rect x="13" y="1.3" width="22.5" height="21" fill="#e4502b" stroke="#222" stroke-width="1.7"/><rect x="1.4" y="34.9" width="12.2" height="12" fill="#fff" stroke="#222" stroke-width="1.7"/><rect x="17.5" y="34.9" width="12" height="12" fill="#fff" stroke="#222" stroke-width="1.7"/><circle cx="36.5" cy="36.4" r="11.7" fill="#fff"/><circle cx="36.5" cy="36.4" r="10.7" fill="#1a7db0"/><path d="M28.368000000000002 36.4 H44.632 M36.5 28.268 V44.532" stroke="#fff" stroke-width="3.638"/></svg>
<div class="t" style="left:1726.5px;width:1000px;text-align:center;top:139.7px;font-size:18px;line-height:20.11px;color:#333;font-weight:400;">New</div>
<svg class="r" style="left:2268px;top:87px" width="50" height="50" viewBox="0 0 50 50"><path d="M7.3 33 V15.4 H39 V28 M22.5 21 V33" stroke="#222" stroke-width="1.7" fill="none"/><rect x="12.4" y="1.3" width="21.4" height="20" fill="#e4502b" stroke="#222" stroke-width="1.7"/><rect x="1.2" y="33" width="11.7" height="11.7" fill="#fff" stroke="#222" stroke-width="1.7"/><rect x="16" y="33" width="12" height="11.7" fill="#fff" stroke="#222" stroke-width="1.7"/><circle cx="36.3" cy="35.9" r="12.5" fill="#fff"/><circle cx="36.3" cy="35.9" r="11.5" fill="#e4502b"/><path d="M27.559999999999995 35.9 H45.04" stroke="#fff" stroke-width="4.14"/></svg>
<div class="t" style="left:1792.7px;width:1000px;text-align:center;top:139.7px;font-size:18px;line-height:20.11px;color:#333;font-weight:400;">Delete</div>
<div class="t" style="left:1759.6px;width:1000px;text-align:center;top:186.4px;font-size:18px;line-height:20.11px;color:#a3a3a3;font-weight:400;">Item Group</div>
<div class="r" style="left:2339px;top:82px;width:63px;height:125px;border:2px solid #8e8e8e;border-radius:5px;background:linear-gradient(#f8f9fb,#ececec 70%,#f2f2f2);box-shadow:inset 0 0 0 1px #e8eef6;"></div>
<svg class="r" style="left:0px;top:0px" width="2480" height="200" viewBox="0 0 2480 200"><path d="M2347.2 99.5 L2360.8 93.6 L2380.3 88.8 L2392.5 100 V126.8 L2371 135.6 L2347.2 125.8 Z" fill="#fff" stroke="#111" stroke-width="1.9" stroke-linejoin="round"/><path d="M2360.8 93.6 L2371 106.8 L2392.5 100 M2371 106.8 V135.6 M2347.2 99.5 L2360.8 93.6" fill="none" stroke="#111" stroke-width="1.9"/><path d="M2353 108.3 L2365.2 113.1 V122.9 L2353 119 Z" fill="none" stroke="#111" stroke-width="1.8"/><path d="M2378.8 130.7 V112.7 L2386.1 110.2 V125.8" fill="none" stroke="#111" stroke-width="1.8"/></svg>
<div class="t" style="left:1869.0px;width:1000px;text-align:center;top:143.7px;font-size:18px;line-height:20.11px;color:#333;font-weight:400;">Project</div>
<div class="r" style="left:2px;top:75px;width:111px;height:1445px;background:#e8e9e9;"></div>
<div class="r" style="left:113px;top:75px;width:2px;height:1445px;background:#808080;"></div>
<div class="r" style="left:2px;top:224px;width:111px;height:75px;background:#dbdcdd;"></div>
<div class="r" style="left:2px;top:224px;width:4px;height:75px;background:#e4502b;"></div>
<svg class="r" style="left:0px;top:0px" width="120" height="200" viewBox="0 0 120 200"><path d="M32.5 99 L57 88 L79.3 99 V125.4 L57 134.6 L32.5 125.4 Z" fill="#fff" stroke="#222" stroke-width="1.9" stroke-linejoin="round"/><path d="M57 114 L79.3 125.4 L57 134.6 L32.5 125.4 Z" fill="#e4502b" stroke="#222" stroke-width="2"/><path d="M57 88 V114" stroke="#222" stroke-width="1.9"/><path d="M40 122 V103 L49.5 98.5 V117" fill="none" stroke="#222" stroke-width="2"/><path d="M62 97.5 L75.5 104 V116 L62 109.5 Z" fill="none" stroke="#222" stroke-width="2"/></svg>
<svg class="r" style="left:0px;top:75px" width="120" height="200" viewBox="0 0 120 200"><path d="M32.5 99 L57 88 L79.3 99 V125.4 L57 134.6 L32.5 125.4 Z" fill="#fff" stroke="#222" stroke-width="1.9" stroke-dasharray="8 5" stroke-linejoin="round"/><path d="M57 114 L79.3 125.4 L57 134.6 L32.5 125.4 Z" fill="#e4502b" stroke="#222" stroke-width="2"/><path d="M57 88 V114" stroke="#222" stroke-width="1.9"/><path d="M40 122 V103 L49.5 98.5 V117" fill="none" stroke="#222" stroke-width="2"/><path d="M62 97.5 L75.5 104 V116 L62 109.5 Z" fill="none" stroke="#222" stroke-width="2"/></svg>
<svg class="r" style="left:0px;top:0px" width="120" height="300" viewBox="0 0 120 300"><polygon points="47.80,238.40 60.30,245.15 60.30,258.40 47.80,265.15 35.30,258.40 35.30,245.15" fill="#fff" stroke="#222" stroke-width="2" stroke-linejoin="round"/><path d="M35.30 245.15 L47.80 251.90 L60.30 245.15 M47.80 251.90 L47.80 265.15" fill="none" stroke="#222" stroke-width="2"/><path d="M70.5 240.3 L83 261.55 A12.5 4.5 0 0 1 58 261.55 Z" fill="#fff" stroke="#222" stroke-width="2" stroke-linejoin="round"/><circle cx="60.3" cy="271" r="12.5" fill="#e4502b" stroke="#222" stroke-width="2"/></svg>
<svg class="r" style="left:0px;top:0px" width="120" height="400" viewBox="0 0 120 400"><polygon points="44.75,323.80 57.00,330.42 57.00,343.40 44.75,350.01 32.50,343.40 32.50,330.42" fill="#fff" stroke="#222" stroke-width="2" stroke-linejoin="round"/><path d="M32.50 330.42 L44.75 337.03 L57.00 330.42 M44.75 337.03 L44.75 350.01" fill="none" stroke="#222" stroke-width="2"/><circle cx="67.7" cy="324.2" r="8.9" fill="#fff" stroke="#222" stroke-width="2"/><path d="M54.5 328 L63 323.5 Q68 323 67.5 329 Q67 332 64 333 L57.5 336.5 Z" fill="#e4502b" stroke="#222" stroke-width="1.8" stroke-linejoin="round"/><path d="M52 337 Q54 334 57 336 L61.5 339.5 L60 347.5 L53.5 345.5 Q50 343 52 337 Z" fill="#e4502b" stroke="#222" stroke-width="1.8" stroke-linejoin="round"/><circle cx="69.3" cy="347" r="10.3" fill="#fff" stroke="#222" stroke-width="2"/></svg>
<svg class="r" style="left:0px;top:0px" width="120" height="500" viewBox="0 0 120 500"><path d="M38 389 H63 L74.5 400 V434.5 H38 Z" fill="#fff" stroke="#222" stroke-width="1.9" stroke-linejoin="round"/><path d="M63 389 V400 H74.5" fill="none" stroke="#222" stroke-width="2"/><path d="M57.5 393 V417 A7.5 7.5 0 0 1 43 417 V392 A5.5 5.5 0 0 1 54 392 V412" fill="none" stroke="#e4502b" stroke-width="1.8"/></svg>
<svg class="r" style="left:0px;top:0px" width="120" height="600" viewBox="0 0 120 600"><rect x="54" y="463" width="25.5" height="47" fill="#fff" stroke="#222" stroke-width="1.9"/><rect x="32.5" y="487" width="21.5" height="23" fill="#fff" stroke="#222" stroke-width="1.9"/><rect x="58" y="467" width="7.5" height="5.5" fill="none" stroke="#222" stroke-width="1.7"/><rect x="70" y="467" width="7.5" height="5.5" fill="none" stroke="#222" stroke-width="1.7"/><rect x="58" y="476" width="7.5" height="5.5" fill="none" stroke="#222" stroke-width="1.7"/><rect x="70" y="476" width="7.5" height="5.5" fill="none" stroke="#222" stroke-width="1.7"/><rect x="58" y="485" width="7.5" height="5.5" fill="none" stroke="#222" stroke-width="1.7"/><rect x="70" y="485" width="7.5" height="5.5" fill="none" stroke="#222" stroke-width="1.7"/><rect x="39" y="499" width="7" height="10" fill="#e4502b" stroke="#222" stroke-width="1.5"/><rect x="63" y="499" width="7" height="10" fill="#e4502b" stroke="#222" stroke-width="1.5"/></svg>
<svg class="r" style="left:0px;top:0px" width="120" height="700" viewBox="0 0 120 700"><path d="M41.3 547.6 L65.9 538 L69.5 541 L70.7 542 V575.1 L47.4 583.2 L41.3 577.5 Z" fill="#fff" stroke="#222" stroke-width="2" stroke-linejoin="round"/><path d="M41.3 547.6 L47.4 552.7 L70.7 542 M47.4 552.7 V583.2 M44.5 550 L68 539.5" fill="none" stroke="#222" stroke-width="1.8"/><path d="M51 561 L55.7 557 L60 562 V572.4 L51 568.4 Z M60 562 L67.5 558.2 V568.4 L60 572.4" fill="#fff" stroke="#222" stroke-width="1.7" stroke-linejoin="round"/><path d="M55.7 557 L63.1 553.5 L67.5 558.2 L60 562 Z" fill="#e4502b" stroke="#222" stroke-width="1.6" stroke-linejoin="round"/><path d="M62.5 570.5 V565 L65.3 563.7 V569" fill="none" stroke="#222" stroke-width="1.5"/><rect x="54" y="563.5" width="2.4" height="2.4" fill="#222"/></svg>
<svg class="r" style="left:0px;top:0px" width="120" height="700" viewBox="0 0 120 700"><path d="M37 615 H61 L70 624 V660 H37 Z" fill="#fff" stroke="#222" stroke-width="2"/><path d="M40 612 H64 L73 621 V657 H40 Z" fill="#fff" stroke="#222" stroke-width="2"/><path d="M43 609 H65 L75.5 619.5 V654 H43 Z" fill="#fff" stroke="#222" stroke-width="1.9" stroke-linejoin="round"/><path d="M65 609 V619.5 H75.5" fill="none" stroke="#222" stroke-width="2"/><rect x="49" y="627" width="19" height="10" fill="none" stroke="#e4502b" stroke-width="1.8"/><path d="M49 642 H68 M49 647 H68" stroke="#e4502b" stroke-width="1.6"/></svg>
<svg class="r" style="left:0px;top:0px" width="120" height="1520" viewBox="0 0 120 1520"><circle cx="56" cy="1335.5" r="23.5" fill="#fff" stroke="#111" stroke-width="1.9"/><path d="M48 1328 A8 8 0 1 1 60 1335 Q56 1338 56 1343 V1344" fill="none" stroke="#e4502b" stroke-width="4"/><rect x="53.5" y="1346" width="5" height="4.5" fill="#e4502b"/></svg>
<svg class="r" style="left:0px;top:0px" width="120" height="1520" viewBox="0 0 120 1520"><path d="M52.91 1386.90 L59.09 1386.90 L59.87 1391.39 L66.77 1394.25 L70.51 1391.63 L74.87 1395.99 L72.25 1399.73 L75.11 1406.63 L79.60 1407.41 L79.60 1413.59 L75.11 1414.37 L72.25 1421.27 L74.87 1425.01 L70.51 1429.37 L66.77 1426.75 L59.87 1429.61 L59.09 1434.10 L52.91 1434.10 L52.13 1429.61 L45.23 1426.75 L41.49 1429.37 L37.13 1425.01 L39.75 1421.27 L36.89 1414.37 L32.40 1413.59 L32.40 1407.41 L36.89 1406.63 L39.75 1399.73 L37.13 1395.99 L41.49 1391.63 L45.23 1394.25 L52.13 1391.39 Z" fill="#fff" stroke="#111" stroke-width="2" stroke-linejoin="round"/><circle cx="56" cy="1410.5" r="9.8" fill="none" stroke="#e4502b" stroke-width="1.8"/></svg>
<svg class="r" style="left:0px;top:0px" width="120" height="1520" viewBox="0 0 120 1520"><path d="M36 1468 L53 1485 L36 1503 M53 1468 L71 1485 L53 1503" fill="none" stroke="#222" stroke-width="1.9"/></svg>
<div class="r" style="left:115px;top:211px;width:2303px;height:1309px;background:#f7f7f7;"></div>
<div class="r" style="left:2418px;top:211px;width:62px;height:1309px;background:#f4f4f4;"></div>
<div class="r" style="left:2418px;top:211px;width:2px;height:1309px;background:#8a8a8a;"></div>
<div class="r" style="left:2420px;top:261px;width:60px;height:50px;background:#d9d9d9;"></div>
<div class="r" style="left:2420px;top:363px;width:60px;height:49px;background:#d9d9d9;"></div>
<div class="r" style="left:2420px;top:464px;width:60px;height:50px;background:#d9d9d9;"></div>
<svg class="r" style="left:0px;top:0px" width="2480" height="900" viewBox="0 0 2480 900"><rect x="2432" y="221" width="38" height="27" fill="#fff" stroke="#333" stroke-width="2"/><path d="M2432 228.5 H2470 M2444 228.5 V248 M2444 238 H2470" stroke="#333" stroke-width="2"/><circle cx="2458.3" cy="286" r="18.3" fill="none" stroke="#111" stroke-width="1.8"/><path d="M2458.3 281 V297 M2453.5 297.5 H2463 M2454.5 281 H2459" stroke="#111" stroke-width="3"/><circle cx="2458.3" cy="275" r="2.2" fill="#111"/><circle cx="2460.7" cy="345" r="10.6" fill="#fff" stroke="#222" stroke-width="1.5"/><path d="M2470.3 320 L2480 338 Q2475 341 2468 339" fill="#fff" stroke="#222" stroke-width="1.5"/><path d="M2443.3 319.5 H2455.5 L2461.3 325.5 V342.8 H2443.3 Z" fill="#fff" stroke="#222" stroke-width="1.6" stroke-linejoin="round"/><path d="M2446.5 329 H2458 M2446.5 332.3 H2458 M2446.5 335.6 H2458" stroke="#222" stroke-width="1.3"/><polygon points="2456.75,370.00 2466.50,375.26 2466.50,385.60 2456.75,390.87 2447.00,385.60 2447.00,375.26" fill="#999" stroke="#222" stroke-width="1.4" stroke-linejoin="round"/><polygon points="2456.75,370.00 2466.50,375.26 2456.75,380.53 2447.00,375.26" fill="#aaa" stroke="#222" stroke-width="1.4" stroke-linejoin="round"/><polygon points="2456.75,380.53 2466.50,375.26 2466.50,385.60 2456.75,390.87" fill="#999" stroke="#222" stroke-width="1.4" stroke-linejoin="round"/><path d="M2447.00 375.26 L2456.75 380.53 L2466.50 375.26 M2456.75 380.53 L2456.75 390.87" fill="none" stroke="#222" stroke-width="1.4"/><polygon points="2446.00,388.00 2452.00,391.24 2452.00,397.60 2446.00,400.84 2440.00,397.60 2440.00,391.24" fill="#fff" stroke="#222" stroke-width="1.3" stroke-linejoin="round"/><path d="M2440.00 391.24 L2446.00 394.48 L2452.00 391.24 M2446.00 394.48 L2446.00 400.84" fill="none" stroke="#222" stroke-width="1.3"/><polygon points="2465.00,389.00 2473.00,393.32 2473.00,401.80 2465.00,406.12 2457.00,401.80 2457.00,393.32" fill="#fff" stroke="#222" stroke-width="1.3" stroke-linejoin="round"/><path d="M2457.00 393.32 L2465.00 397.64 L2473.00 393.32 M2465.00 397.64 L2465.00 406.12" fill="none" stroke="#222" stroke-width="1.3"/><path d="M2443 429 L2461 420 L2478 429 V449 L2461 458 L2443 449 Z" fill="none" stroke="#222" stroke-width="1.5" stroke-dasharray="6 6" stroke-dashoffset="3"/><path d="M2461 420 V433 M2443 449 L2453 444 M2478 449 L2469 444" stroke="#222" stroke-width="1.5"/><polygon points="2461.00,432.00 2469.00,436.32 2469.00,444.80 2461.00,449.12 2453.00,444.80 2453.00,436.32" fill="#fff" stroke="#222" stroke-width="1.5" stroke-linejoin="round"/><path d="M2453.00 436.32 L2461.00 440.64 L2469.00 436.32 M2461.00 440.64 L2461.00 449.12" fill="none" stroke="#222" stroke-width="1.5"/><path d="M2441 478 L2459 468 L2477 478 V499 L2459 509 L2441 499 Z" fill="none" stroke="#222" stroke-width="1.6"/><path d="M2441 478 L2459 488 L2477 478 M2459 488 V509" fill="none" stroke="#222" stroke-width="1.4"/><path d="M2459 472 L2468 497 A9 4 0 0 1 2450 497 Z" fill="#888" stroke="#222" stroke-width="1.4"/><path d="M2443 526 L2465 518 L2480 524 V546 L2460 556 L2443 549 Z" fill="#fff" stroke="#222" stroke-width="1.6" stroke-linejoin="round"/><path d="M2443 526 L2460 534 L2480 524 M2460 534 V556 M2453 522 L2472 530" stroke="#222" stroke-width="1.5" fill="none"/><path d="M2447 535 L2455 539 V547 L2447 543 Z" fill="#bbb" stroke="#222" stroke-width="1.2"/><path d="M2443.5 575 H2461 L2471.5 585.5 V610.5 H2443.5 Z" fill="#fff" stroke="#222" stroke-width="1.6" stroke-linejoin="round"/><path d="M2461 575 V585.5 H2471.5" fill="none" stroke="#222" stroke-width="1.4"/><path d="M2456.5 580 V596 A4.5 4.5 0 0 1 2447.5 596 V578 A3.5 3.5 0 0 1 2454.5 578 V594" fill="none" stroke="#222" stroke-width="1.5"/><path d="M2446 630 H2457 L2461 625.5 H2472 L2476 630 H2478 Q2480 630 2480 633 V649 Q2480 652 2477 652 H2446 Q2443.5 652 2443.5 649 V633 Q2443.5 630 2446 630 Z" fill="#fff" stroke="#222" stroke-width="1.6" stroke-linejoin="round"/><path d="M2446 630 V627 H2451 V630" fill="none" stroke="#222" stroke-width="1.4"/><circle cx="2448.5" cy="635.5" r="2.2" fill="none" stroke="#222" stroke-width="1.3"/><circle cx="2465" cy="640" r="8" fill="none" stroke="#222" stroke-width="1.6"/><circle cx="2465" cy="640" r="4.5" fill="none" stroke="#222" stroke-width="1.6"/><circle cx="2470" cy="683" r="6" fill="#fff" stroke="#222" stroke-width="1.5"/><path d="M2457 690 L2466 685 L2469 691 L2460 696 Z" fill="#888" stroke="#222" stroke-width="1.3"/><polygon points="2451.00,684.00 2459.00,688.32 2459.00,696.80 2451.00,701.12 2443.00,696.80 2443.00,688.32" fill="#fff" stroke="#222" stroke-width="1.5" stroke-linejoin="round"/><path d="M2443.00 688.32 L2451.00 692.64 L2459.00 688.32 M2451.00 692.64 L2451.00 701.12" fill="none" stroke="#222" stroke-width="1.5"/><rect x="2458.5" y="689.5" width="20.5" height="19.5" fill="#fff" stroke="#222" stroke-width="1.6"/><path d="M2462 693 H2467 V698 H2462 Z M2470 693 H2475 V697 H2470 Z M2462 701 H2466 V705 H2462 Z M2470 700 H2475 V705 H2470 Z" fill="#111"/><path d="M2466 698 L2472 701 M2472 696 L2465 702" stroke="#111" stroke-width="1.6"/><circle cx="2470" cy="733.5" r="6.5" fill="#fff" stroke="#222" stroke-width="1.5"/><path d="M2457 740 L2467 734 L2471 741 L2461 746 Z" fill="#8a8a8a" stroke="#222" stroke-width="1.3"/><polygon points="2451.50,733.00 2460.00,737.59 2460.00,746.60 2451.50,751.19 2443.00,746.60 2443.00,737.59" fill="#fff" stroke="#222" stroke-width="1.5" stroke-linejoin="round"/><path d="M2443.00 737.59 L2451.50 742.18 L2460.00 737.59 M2451.50 742.18 L2451.50 751.19" fill="none" stroke="#222" stroke-width="1.5"/><path d="M2457 746 L2467 747 L2466 756 L2458 754 Z" fill="#8a8a8a" stroke="#222" stroke-width="1.3"/><circle cx="2471" cy="751" r="8" fill="#fff" stroke="#222" stroke-width="1.5"/><polygon points="2464.25,777.50 2475.50,783.58 2475.50,795.50 2464.25,801.58 2453.00,795.50 2453.00,783.58" fill="#999" stroke="#222" stroke-width="1.4" stroke-linejoin="round"/><polygon points="2464.25,777.50 2475.50,783.58 2464.25,789.65 2453.00,783.58" fill="#aaa" stroke="#222" stroke-width="1.4" stroke-linejoin="round"/><polygon points="2464.25,789.65 2475.50,783.58 2475.50,795.50 2464.25,801.58" fill="#999" stroke="#222" stroke-width="1.4" stroke-linejoin="round"/><path d="M2453.00 783.58 L2464.25 789.65 L2475.50 783.58 M2464.25 789.65 L2464.25 801.58" fill="none" stroke="#222" stroke-width="1.4"/><polygon points="2452.50,797.00 2460.00,801.05 2460.00,809.00 2452.50,813.05 2445.00,809.00 2445.00,801.05" fill="#fff" stroke="#222" stroke-width="1.3" stroke-linejoin="round"/><path d="M2445.00 801.05 L2452.50 805.10 L2460.00 801.05 M2452.50 805.10 L2452.50 813.05" fill="none" stroke="#222" stroke-width="1.3"/><path d="M2443 828 H2461 L2472 839 V865 H2443 Z" fill="#fff" stroke="#222" stroke-width="1.6" stroke-linejoin="round"/><path d="M2461 828 V839 H2472" fill="none" stroke="#222" stroke-width="1.4"/><circle cx="2457" cy="851" r="7.5" fill="none" stroke="#222" stroke-width="1.5"/><path d="M2457 846 V851 H2461" fill="none" stroke="#222" stroke-width="1.4"/></svg>
<div class="r" style="left:122px;top:219px;width:432px;height:1297px;border:1.5px solid #7d7d7d;background:#fff;"></div>
<div class="r" style="left:123px;top:220px;width:430px;height:31px;background:#f2f2f2;"></div>
<div class="r" style="left:123px;top:251px;width:430px;height:1px;background:#8a8a8a;"></div>
<div class="t" style="left:128.0px;top:225.7px;font-size:18px;line-height:20.11px;color:#333;font-weight:400;">Navigation pane</div>
<svg class="r" style="left:531px;top:228px" width="12" height="16" viewBox="0 0 12 16"><path d="M3 1 H9 M4 1 V9 H8 V1 M2 9 H10 M6 9 V15" stroke="#111" stroke-width="2" fill="none"/></svg>
<div class="r" style="left:131px;top:259px;width:414px;height:33px;border:2px solid #1a1a1a;background:#fff;"></div>
<svg class="r" style="left:427px;top:271px" width="12" height="8" viewBox="0 0 12 8"><path d="M1 1 L6 6 L11 1" stroke="#333" stroke-width="1.5" fill="none"/></svg>
<svg class="r" style="left:462px;top:263px" width="27" height="25" viewBox="0 0 27 25"><circle cx="10" cy="10" r="8.5" stroke="#222" stroke-width="1.2" fill="none"/><path d="M16.5 16.5 L25 25" stroke="#222" stroke-width="1.3"/></svg>
<svg class="r" style="left:512px;top:267px" width="18" height="18" viewBox="0 0 18 18"><path d="M0 0 L18 18 M18 0 L0 18" stroke="#444" stroke-width="1.1"/></svg>
<div class="t" style="left:-455.5px;width:1000px;text-align:right;top:295.3px;font-size:17.3px;line-height:19.32px;color:#333;font-weight:400;text-decoration:underline;">Search</div>
<div class="r" style="left:124px;top:326px;width:428px;height:32px;border:1px solid #adadad;border-radius:3px;background:linear-gradient(#f3f3f3,#ebebeb);"></div>
<div class="t" style="left:-174.0px;width:1000px;text-align:center;top:333.7px;font-size:18px;line-height:20.11px;color:#333;font-weight:400;">Add filter...</div>
<svg class="r" style="left:537px;top:341px" width="8" height="5" viewBox="0 0 8 5"><path d="M0 0 H8 L4 5 Z" fill="#111"/></svg>
<div class="r" style="left:127px;top:371px;width:297px;height:29px;background:linear-gradient(#f2f2f2,#e4e4e4);border:1px solid #acacac;"></div>
<div class="t" style="left:-224.5px;width:1000px;text-align:center;top:375.7px;font-size:18px;line-height:20.11px;color:#333;font-weight:400;">OmniClass 21 [2012-05-16]</div>
<div class="r" style="left:424px;top:371px;width:7px;height:29px;background:linear-gradient(#f2f2f2,#e4e4e4);border:1px solid #acacac;border-left:none;"></div>
<div class="r" style="left:127px;top:400px;width:149px;height:30px;background:linear-gradient(#f2f2f2,#e4e4e4);border:1px solid #acacac;"></div>
<div class="t" style="left:-298.5px;width:1000px;text-align:center;top:405.7px;font-size:18px;line-height:20.11px;color:#333;font-weight:400;">BIP</div>
<div class="r" style="left:276px;top:400px;width:273px;height:30px;background:linear-gradient(#f2f2f2,#e4e4e4);border:1px solid #acacac;"></div>
<div class="t" style="left:-87.5px;width:1000px;text-align:center;top:405.7px;font-size:18px;line-height:20.11px;color:#333;font-weight:400;">System numbering</div>
<div class="r" style="left:127px;top:430px;width:133px;height:30px;background:linear-gradient(#f2f2f2,#e4e4e4);border:1px solid #acacac;"></div>
<div class="t" style="left:-306.5px;width:1000px;text-align:center;top:436.2px;font-size:18px;line-height:20.11px;color:#333;font-weight:400;">Location</div>
<div class="r" style="left:260px;top:430px;width:194px;height:30px;background:linear-gradient(#f2f2f2,#e4e4e4);border:1px solid #acacac;"></div>
<div class="t" style="left:-143.0px;width:1000px;text-align:center;top:436.2px;font-size:18px;line-height:20.11px;color:#333;font-weight:400;">Status på objekt</div>
<div class="r" style="left:454px;top:430px;width:95px;height:30px;background:linear-gradient(#f2f2f2,#e4e4e4);border:1px solid #acacac;"></div>
<div class="t" style="left:1.5px;width:1000px;text-align:center;top:436.2px;font-size:18px;line-height:20.11px;color:#333;font-weight:400;">test</div>
<div class="r" style="left:282px;top:460px;width:267px;height:31px;background:linear-gradient(#f2f2f2,#e4e4e4);border:1px solid #acacac;"></div>
<div class="t" style="left:-84.5px;width:1000px;text-align:center;top:465.3px;font-size:18px;line-height:20.11px;color:#333;font-weight:400;">OmniClass 23 [2010-06-24]</div>
<div class="r" style="left:123px;top:490px;width:430px;height:1px;background:#dcdcdc;"></div>
<div class="r" style="left:124px;top:458px;width:158px;height:33px;background:#fff;border:1px solid #acacac;border-bottom:none;"></div>
<div class="t" style="left:-297.0px;width:1000px;text-align:center;top:465.3px;font-size:18px;line-height:20.11px;color:#333;font-weight:400;">Item Groups</div>
<div class="t" style="left:160.0px;top:501.5px;font-size:17.8px;line-height:19.88px;color:#000;font-weight:700;">Demo Database</div>
<svg class="r" style="left:137px;top:506px" width="10" height="9" viewBox="0 0 10 9"><path d="M10 0 V9 H0 Z" fill="#444"/></svg>
<div class="t" style="left:188.0px;top:529.7px;font-size:18px;line-height:20.11px;color:#333;font-weight:400;">00 - Finishes</div>
<svg class="r" style="left:169px;top:534.0px" width="9" height="12" viewBox="0 0 9 12"><path d="M1 1 L8 6 L1 11 Z" stroke="#666" stroke-width="1.2" fill="none"/></svg>
<div class="t" style="left:188.0px;top:558.1px;font-size:18px;line-height:20.11px;color:#333;font-weight:400;">01 - FF&amp;E</div>
<svg class="r" style="left:169px;top:562.38px" width="9" height="12" viewBox="0 0 9 12"><path d="M1 1 L8 6 L1 11 Z" stroke="#666" stroke-width="1.2" fill="none"/></svg>
<div class="t" style="left:188.0px;top:586.5px;font-size:18px;line-height:20.11px;color:#333;font-weight:400;">02 - Building parts</div>
<svg class="r" style="left:169px;top:590.76px" width="9" height="12" viewBox="0 0 9 12"><path d="M1 1 L8 6 L1 11 Z" stroke="#666" stroke-width="1.2" fill="none"/></svg>
<div class="t" style="left:188.0px;top:614.9px;font-size:18px;line-height:20.11px;color:#333;font-weight:400;">03 - HVAC</div>
<svg class="r" style="left:169px;top:619.14px" width="9" height="12" viewBox="0 0 9 12"><path d="M1 1 L8 6 L1 11 Z" stroke="#666" stroke-width="1.2" fill="none"/></svg>
<div class="t" style="left:188.0px;top:643.2px;font-size:18px;line-height:20.11px;color:#333;font-weight:400;">04 - Electro</div>
<svg class="r" style="left:169px;top:647.52px" width="9" height="12" viewBox="0 0 9 12"><path d="M1 1 L8 6 L1 11 Z" stroke="#666" stroke-width="1.2" fill="none"/></svg>
<div class="t" style="left:188.0px;top:671.6px;font-size:18px;line-height:20.11px;color:#333;font-weight:400;">05 - IT</div>
<svg class="r" style="left:169px;top:675.9px" width="9" height="12" viewBox="0 0 9 12"><path d="M1 1 L8 6 L1 11 Z" stroke="#666" stroke-width="1.2" fill="none"/></svg>
<div class="t" style="left:188.0px;top:700.0px;font-size:18px;line-height:20.11px;color:#333;font-weight:400;">08 - Doors</div>
<svg class="r" style="left:165px;top:706.28px" width="10" height="9" viewBox="0 0 10 9"><path d="M10 0 V9 H0 Z" fill="#444"/></svg>
<div class="r" style="left:213px;top:724px;width:125px;height:27px;background:#ebebeb;border:1.5px solid #a9c7e6;border-radius:2px;"></div>
<div class="t" style="left:216.0px;top:728.4px;font-size:18px;line-height:20.11px;color:#333;font-weight:400;">01 - Door Type</div>
<div class="t" style="left:216.0px;top:756.8px;font-size:18px;line-height:20.11px;color:#333;font-weight:400;">02 - Frame</div>
<div class="t" style="left:216.0px;top:785.1px;font-size:18px;line-height:20.11px;color:#333;font-weight:400;">03 - Glazing</div>
<div class="t" style="left:216.0px;top:813.5px;font-size:18px;line-height:20.11px;color:#333;font-weight:400;">04 - Lockset/Latchset</div>
<div class="t" style="left:216.0px;top:841.9px;font-size:18px;line-height:20.11px;color:#333;font-weight:400;">05 - Exit Devices</div>
<div class="t" style="left:188.0px;top:870.3px;font-size:18px;line-height:20.11px;color:#333;font-weight:400;">10 - Door Hardware combinations</div>
<div class="t" style="left:188.0px;top:898.7px;font-size:18px;line-height:20.11px;color:#333;font-weight:400;">11 - Door Hardware parts</div>
<svg class="r" style="left:169px;top:902.94px" width="9" height="12" viewBox="0 0 9 12"><path d="M1 1 L8 6 L1 11 Z" stroke="#666" stroke-width="1.2" fill="none"/></svg>
<div class="r" style="left:191px;top:715px;width:167px;height:46px;border:3px solid #e8413e;box-shadow:1px 2px 3px rgba(0,0,0,0.25);"></div>
<div class="r" style="left:560px;top:250px;width:973px;height:482px;border:1.5px solid #7d7d7d;border-top:none;background:#fff;"></div>
<div class="r" style="left:560px;top:216px;width:973px;height:35px;background:#f3f3f3;"></div>
<div class="r" style="left:754px;top:250px;width:779px;height:1.5px;background:#9a9a9a;"></div>
<div class="r" style="left:560px;top:216px;width:195px;height:36px;border:1px solid #9a9a9a;border-bottom:none;background:linear-gradient(#fff,#fafafa);"></div>
<div class="t" style="left:569.0px;top:225.7px;font-size:18px;line-height:20.11px;color:#333;font-weight:400;">Items [01 - Door Type]</div>
<div class="r" style="left:562px;top:252px;width:970px;height:31px;background:linear-gradient(#fff,#f6f6f6);"></div>
<div class="r" style="left:562px;top:283px;width:970px;height:1px;background:#d5d5d5;"></div>
<div class="r" style="left:713px;top:252px;width:1.5px;height:31px;background:#e2e2e2;"></div>
<div class="r" style="left:874px;top:252px;width:1.5px;height:31px;background:#e2e2e2;"></div>
<div class="r" style="left:1051px;top:252px;width:1.5px;height:31px;background:#e2e2e2;"></div>
<div class="t" style="left:569.0px;top:257.9px;font-size:18px;line-height:20.11px;color:#333;font-weight:400;">Item Number</div>
<div class="t" style="left:719.0px;top:257.9px;font-size:18px;line-height:20.11px;color:#333;font-weight:400;">Name</div>
<div class="t" style="left:879.5px;top:257.9px;font-size:18px;line-height:20.11px;color:#333;font-weight:400;">Door hardware co...</div>
<div class="t" style="left:571.5px;top:288.1px;font-size:18px;line-height:20.11px;color:#333;font-weight:400;">0801.001</div>
<div class="t" style="left:722.0px;top:288.1px;font-size:18px;line-height:20.11px;color:#333;font-weight:400;">D9</div>
<div class="t" style="left:882.0px;top:288.1px;font-size:18px;line-height:20.11px;color:#333;font-weight:400;">Comb.001</div>
<div class="t" style="left:571.5px;top:316.3px;font-size:18px;line-height:20.11px;color:#333;font-weight:400;">0801.002</div>
<div class="t" style="left:722.0px;top:316.3px;font-size:18px;line-height:20.11px;color:#333;font-weight:400;">D10</div>
<div class="r" style="left:562px;top:696px;width:970px;height:35px;background:#f3f3f3;"></div>
<div class="t" style="left:568.5px;top:705.0px;font-size:16px;line-height:17.87px;color:#333;font-weight:400;">2 of 2</div>
<svg class="r" style="left:1506px;top:703px" width="22" height="22" viewBox="0 0 22 22"><rect x="0.8" y="5.8" width="6.4" height="15.4" fill="#fff" stroke="#333" stroke-width="1.4"/><rect x="14.8" y="5.8" width="6.4" height="15.4" fill="#fff" stroke="#333" stroke-width="1.4"/><rect x="7.5" y="0.8" width="6.8" height="16.4" fill="#e4502b" stroke="#333" stroke-width="1.4"/></svg>
<div class="r" style="left:560px;top:769px;width:973px;height:747px;border:1.5px solid #7d7d7d;border-top:none;background:#fff;"></div>
<div class="r" style="left:560px;top:735px;width:973px;height:35px;background:#f3f3f3;"></div>
<div class="r" style="left:961px;top:769px;width:572px;height:1.5px;background:#9a9a9a;"></div>
<div class="r" style="left:837px;top:738px;width:125px;height:33px;border:1px solid #9a9a9a;background:linear-gradient(#f4f4f4,#dcdcdc);"></div>
<div class="r" style="left:560px;top:735px;width:278px;height:36px;border:1px solid #9a9a9a;border-bottom:none;background:#fff;"></div>
<div class="t" style="left:569.0px;top:745.7px;font-size:18px;line-height:20.11px;color:#333;font-weight:400;">Occurrences [01 - Door Type]</div>
<svg class="r" style="left:816px;top:748px" width="12" height="12" viewBox="0 0 12 12"><path d="M1 1 L11 11 M11 1 L1 11" stroke="#111" stroke-width="2.2"/></svg>
<div class="t" style="left:846.0px;top:745.7px;font-size:18px;line-height:20.11px;color:#333;font-weight:400;">Sub Items</div>
<svg class="r" style="left:939px;top:748px" width="12" height="12" viewBox="0 0 12 12"><path d="M1 1 L11 11 M11 1 L1 11" stroke="#111" stroke-width="2.2"/></svg>
<div class="r" style="left:562px;top:771px;width:970px;height:31px;background:linear-gradient(#fff,#f6f6f6);"></div>
<div class="r" style="left:562px;top:802px;width:970px;height:1px;background:#d5d5d5;"></div>
<div class="r" style="left:713px;top:771px;width:1.5px;height:31px;background:#e2e2e2;"></div>
<div class="r" style="left:863px;top:771px;width:1.5px;height:31px;background:#e2e2e2;"></div>
<div class="r" style="left:1013px;top:771px;width:1.5px;height:31px;background:#e2e2e2;"></div>
<div class="t" style="left:569.0px;top:777.3px;font-size:17.4px;line-height:19.44px;color:#333;font-weight:400;">Room: Room Fu...</div>
<div class="t" style="left:719.0px;top:777.3px;font-size:17.4px;line-height:19.44px;color:#333;font-weight:400;">Room: Room N...</div>
<div class="t" style="left:869.0px;top:777.3px;font-size:17.4px;line-height:19.44px;color:#333;font-weight:400;">Room: Room N...</div>
<div class="t" style="left:571.5px;top:807.5px;font-size:18px;line-height:20.11px;color:#333;font-weight:400;">00.001</div>
<div class="t" style="left:722.0px;top:807.5px;font-size:18px;line-height:20.11px;color:#333;font-weight:400;"></div>
<div class="t" style="left:872.0px;top:807.5px;font-size:18px;line-height:20.11px;color:#333;font-weight:400;">Admin</div>
<div class="t" style="left:571.5px;top:835.9px;font-size:18px;line-height:20.11px;color:#333;font-weight:400;">00.002</div>
<div class="t" style="left:722.0px;top:835.9px;font-size:18px;line-height:20.11px;color:#333;font-weight:400;"></div>
<div class="t" style="left:872.0px;top:835.9px;font-size:18px;line-height:20.11px;color:#333;font-weight:400;">Admin</div>
<div class="t" style="left:571.5px;top:864.3px;font-size:18px;line-height:20.11px;color:#333;font-weight:400;">01.001</div>
<div class="t" style="left:722.0px;top:864.3px;font-size:18px;line-height:20.11px;color:#333;font-weight:400;">1A01</div>
<div class="t" style="left:872.0px;top:864.3px;font-size:18px;line-height:20.11px;color:#333;font-weight:400;">Patient Admin....</div>
<div class="t" style="left:571.5px;top:892.7px;font-size:18px;line-height:20.11px;color:#333;font-weight:400;">01.006</div>
<div class="t" style="left:722.0px;top:892.7px;font-size:18px;line-height:20.11px;color:#333;font-weight:400;">1A06</div>
<div class="t" style="left:872.0px;top:892.7px;font-size:18px;line-height:20.11px;color:#333;font-weight:400;">Office</div>
<div class="t" style="left:571.5px;top:921.1px;font-size:18px;line-height:20.11px;color:#333;font-weight:400;">04.004</div>
<div class="t" style="left:722.0px;top:921.1px;font-size:18px;line-height:20.11px;color:#333;font-weight:400;">2A04</div>
<div class="t" style="left:872.0px;top:921.1px;font-size:18px;line-height:20.11px;color:#333;font-weight:400;">Dental Surgeo...</div>
<div class="t" style="left:571.5px;top:949.5px;font-size:18px;line-height:20.11px;color:#333;font-weight:400;">04.010</div>
<div class="t" style="left:722.0px;top:949.5px;font-size:18px;line-height:20.11px;color:#333;font-weight:400;">2A10</div>
<div class="t" style="left:872.0px;top:949.5px;font-size:18px;line-height:20.11px;color:#333;font-weight:400;">Dental Waiting</div>
<div class="t" style="left:571.5px;top:977.9px;font-size:18px;line-height:20.11px;color:#333;font-weight:400;">04.024</div>
<div class="t" style="left:722.0px;top:977.9px;font-size:18px;line-height:20.11px;color:#333;font-weight:400;">2C10</div>
<div class="t" style="left:872.0px;top:977.9px;font-size:18px;line-height:20.11px;color:#333;font-weight:400;">Dipc Decon</div>
<div class="t" style="left:571.5px;top:1006.3px;font-size:18px;line-height:20.11px;color:#333;font-weight:400;">04.028</div>
<div class="t" style="left:722.0px;top:1006.3px;font-size:18px;line-height:20.11px;color:#333;font-weight:400;">2C17</div>
<div class="t" style="left:872.0px;top:1006.3px;font-size:18px;line-height:20.11px;color:#333;font-weight:400;">Prosth. Lab</div>
<div class="r" style="left:562px;top:1480px;width:970px;height:35px;background:#f3f3f3;"></div>
<div class="t" style="left:568.5px;top:1488.9px;font-size:15.6px;line-height:17.43px;color:#333;font-weight:400;">8 of 8</div>
<svg class="r" style="left:1506px;top:1486px" width="22" height="22" viewBox="0 0 22 22"><rect x="0.8" y="5.8" width="6.4" height="15.4" fill="#fff" stroke="#333" stroke-width="1.4"/><rect x="14.8" y="5.8" width="6.4" height="15.4" fill="#fff" stroke="#333" stroke-width="1.4"/><rect x="7.5" y="0.8" width="6.8" height="16.4" fill="#e4502b" stroke="#333" stroke-width="1.4"/></svg>
<div class="r" style="left:1539px;top:219px;width:872.5px;height:1297px;border:1.5px solid #7d7d7d;background:#f4f4f4;"></div>
<div class="r" style="left:1540.5px;top:220.5px;width:869.5px;height:30.5px;background:#f0f0f0;"></div>
<div class="r" style="left:1540.5px;top:251px;width:869.5px;height:1px;background:#8a8a8a;"></div>
<div class="t" style="left:1545.5px;top:225.4px;font-size:18px;line-height:20.11px;color:#333;font-weight:400;">Properties</div>
<svg class="r" style="left:2359px;top:228px" width="12" height="16" viewBox="0 0 12 16"><path d="M3 1 H9 M4 1 V9 H8 V1 M2 9 H10 M6 9 V15" stroke="#111" stroke-width="2" fill="none"/></svg>
<svg class="r" style="left:2387px;top:231px" width="12" height="11" viewBox="0 0 12 11"><path d="M1 1 L11 10 M11 1 L1 10" stroke="#111" stroke-width="2.4"/></svg>
<svg class="r" style="left:1568px;top:266px" width="54" height="50" viewBox="0 0 54 50"><path d="M10 36 V16.5 H44 V36 M27 22 V36" stroke="#222" stroke-width="1.9" fill="none"/><rect x="15.5" y="1.4" width="23.2" height="21.2" fill="#e4502b" stroke="#222" stroke-width="1.9"/><rect x="3.5" y="36" width="12.5" height="12.6" fill="#fff" stroke="#222" stroke-width="1.9"/><rect x="20.5" y="36" width="13.5" height="12.6" fill="#fff" stroke="#222" stroke-width="1.9"/><rect x="38.5" y="36" width="12.5" height="12.6" fill="#fff" stroke="#222" stroke-width="1.9"/></svg>
<div class="t" style="left:1641.0px;top:278.9px;font-size:23.8px;line-height:26.58px;color:#000;font-weight:700;">Sub Set: 01 - Door Type</div>
<div class="r" style="left:1550px;top:337px;width:850px;height:335px;border:1.5px solid #d6e1e8;border-radius:6px;box-shadow:1px 1px 0 #fff, inset 1px 1px 0 #fff;"></div>
<div class="r" style="left:1558px;top:328px;width:107px;height:18px;background:#f4f4f4;"></div>
<div class="t" style="left:1562.5px;top:327.1px;font-size:17.6px;line-height:19.66px;color:#1e9ad6;font-weight:700;">Item Group</div>
<div class="t" style="left:1565.0px;top:360.5px;font-size:18px;line-height:20.11px;color:#333;font-weight:400;">Number</div>
<div class="t" style="left:1565.0px;top:398.6px;font-size:18px;line-height:20.11px;color:#333;font-weight:400;">Name</div>
<div class="t" style="left:1565.0px;top:435.5px;font-size:18px;line-height:20.11px;color:#333;font-weight:400;">Description</div>
<div class="r" style="left:1792px;top:356px;width:592px;height:35px;border:1.5px solid #acb3bb;background:#fff;"></div>
<div class="t" style="left:1797.0px;top:360.5px;font-size:18px;line-height:20.11px;color:#333;font-weight:400;">01</div>
<div class="r" style="left:1792px;top:394px;width:592px;height:34px;border:1.5px solid #acb3bb;background:#fff;"></div>
<div class="t" style="left:1797.0px;top:398.6px;font-size:18px;line-height:20.11px;color:#333;font-weight:400;">Door Type</div>
<div class="r" style="left:1792px;top:431px;width:592px;height:113px;border:1.5px solid #acb3bb;background:#fff;"></div>
<div class="t" style="left:1565.0px;top:551.7px;font-size:18px;line-height:20.11px;color:#333;font-weight:400;">View Filter</div>
<div class="t" style="left:1565.0px;top:588.7px;font-size:18px;line-height:20.11px;color:#333;font-weight:400;">Responsibility</div>
<div class="r" style="left:1792px;top:548px;width:592px;height:33px;border:1.5px solid #b6b6b6;background:linear-gradient(#efefef,#e3e3e3);"></div>
<div class="r" style="left:1792px;top:584px;width:592px;height:32px;border:1.5px solid #b6b6b6;background:linear-gradient(#efefef,#e3e3e3);"></div>
<svg class="r" style="left:2364px;top:560px" width="11" height="7" viewBox="0 0 11 7"><path d="M1 1 L5.5 5.5 L10 1" stroke="#333" stroke-width="1.8" fill="none"/></svg>
<svg class="r" style="left:2364px;top:598px" width="11" height="7" viewBox="0 0 11 7"><path d="M1 1 L5.5 5.5 L10 1" stroke="#333" stroke-width="1.8" fill="none"/></svg>
<div class="t" style="left:1565.0px;top:626.7px;font-size:18px;line-height:20.11px;color:#333;font-weight:400;">Sub Item Categories</div>
<div class="r" style="left:1792px;top:622px;width:511px;height:34px;border:1.5px solid #acb3bb;background:#fff;"></div>
<div class="r" style="left:2306px;top:620px;width:37px;height:38px;border:1.5px solid #8e8e8e;background:#dadada;"></div>
<svg class="r" style="left:2316px;top:636.0px" width="18" height="6" viewBox="0 0 18 6"><circle cx="2.5" cy="3" r="1.9" stroke="#222" stroke-width="1.2" fill="none"/><circle cx="9" cy="3" r="1.9" stroke="#222" stroke-width="1.2" fill="none"/><circle cx="15.5" cy="3" r="1.9" stroke="#222" stroke-width="1.2" fill="none"/></svg>
<div class="r" style="left:2346px;top:620px;width:38px;height:38px;border:1.5px solid #d2d2d2;background:#f2f2f2;"></div>
<svg class="r" style="left:2355px;top:629.0px" width="20" height="20" viewBox="0 0 20 20"><path d="M0 0 L20 20 M20 0 L0 20" stroke="#333" stroke-width="1.3"/></svg>
<div class="r" style="left:1550px;top:690px;width:850px;height:106px;border:1.5px solid #d6e1e8;border-radius:6px;box-shadow:1px 1px 0 #fff, inset 1px 1px 0 #fff;"></div>
<div class="r" style="left:1792px;top:709px;width:511px;height:34px;border:1.5px solid #acb3bb;background:#fff;"></div>
<div class="r" style="left:2306px;top:707px;width:37px;height:37px;border:1.5px solid #8e8e8e;background:#dadada;"></div>
<svg class="r" style="left:2316px;top:722.5px" width="18" height="6" viewBox="0 0 18 6"><circle cx="2.5" cy="3" r="1.9" stroke="#222" stroke-width="1.2" fill="none"/><circle cx="9" cy="3" r="1.9" stroke="#222" stroke-width="1.2" fill="none"/><circle cx="15.5" cy="3" r="1.9" stroke="#222" stroke-width="1.2" fill="none"/></svg>
<div class="r" style="left:2346px;top:707px;width:38px;height:37px;border:1.5px solid #d2d2d2;background:#f2f2f2;"></div>
<svg class="r" style="left:2355px;top:715.5px" width="20" height="20" viewBox="0 0 20 20"><path d="M0 0 L20 20 M20 0 L0 20" stroke="#333" stroke-width="1.3"/></svg>
<div class="r" style="left:1792px;top:746px;width:511px;height:35px;border:1.5px solid #acb3bb;background:#fff;"></div>
<div class="r" style="left:2306px;top:745px;width:37px;height:37px;border:1.5px solid #8e8e8e;background:#dadada;"></div>
<svg class="r" style="left:2316px;top:760.5px" width="18" height="6" viewBox="0 0 18 6"><circle cx="2.5" cy="3" r="1.9" stroke="#222" stroke-width="1.2" fill="none"/><circle cx="9" cy="3" r="1.9" stroke="#222" stroke-width="1.2" fill="none"/><circle cx="15.5" cy="3" r="1.9" stroke="#222" stroke-width="1.2" fill="none"/></svg>
<div class="r" style="left:2346px;top:745px;width:38px;height:37px;border:1.5px solid #d2d2d2;background:#f2f2f2;"></div>
<svg class="r" style="left:2355px;top:753.5px" width="20" height="20" viewBox="0 0 20 20"><path d="M0 0 L20 20 M20 0 L0 20" stroke="#333" stroke-width="1.3"/></svg>
<div class="r" style="left:1550px;top:814px;width:850px;height:144px;border:1.5px solid #d6e1e8;border-radius:6px;box-shadow:1px 1px 0 #fff, inset 1px 1px 0 #fff;"></div>
<div class="r" style="left:1792px;top:833px;width:511px;height:35px;border:1.5px solid #acb3bb;background:#fff;"></div>
<div class="r" style="left:2306px;top:832px;width:37px;height:37px;border:1.5px solid #8e8e8e;background:#dadada;"></div>
<svg class="r" style="left:2316px;top:847.5px" width="18" height="6" viewBox="0 0 18 6"><circle cx="2.5" cy="3" r="1.9" stroke="#222" stroke-width="1.2" fill="none"/><circle cx="9" cy="3" r="1.9" stroke="#222" stroke-width="1.2" fill="none"/><circle cx="15.5" cy="3" r="1.9" stroke="#222" stroke-width="1.2" fill="none"/></svg>
<div class="r" style="left:2346px;top:832px;width:38px;height:37px;border:1.5px solid #d2d2d2;background:#f2f2f2;"></div>
<svg class="r" style="left:2355px;top:840.5px" width="20" height="20" viewBox="0 0 20 20"><path d="M0 0 L20 20 M20 0 L0 20" stroke="#333" stroke-width="1.3"/></svg>
<div class="r" style="left:1792px;top:870px;width:511px;height:35px;border:1.5px solid #acb3bb;background:#fff;"></div>
<div class="r" style="left:2306px;top:869px;width:37px;height:38px;border:1.5px solid #8e8e8e;background:#dadada;"></div>
<svg class="r" style="left:2316px;top:885.0px" width="18" height="6" viewBox="0 0 18 6"><circle cx="2.5" cy="3" r="1.9" stroke="#222" stroke-width="1.2" fill="none"/><circle cx="9" cy="3" r="1.9" stroke="#222" stroke-width="1.2" fill="none"/><circle cx="15.5" cy="3" r="1.9" stroke="#222" stroke-width="1.2" fill="none"/></svg>
<div class="r" style="left:2346px;top:869px;width:38px;height:38px;border:1.5px solid #d2d2d2;background:#f2f2f2;"></div>
<svg class="r" style="left:2355px;top:878.0px" width="20" height="20" viewBox="0 0 20 20"><path d="M0 0 L20 20 M20 0 L0 20" stroke="#333" stroke-width="1.3"/></svg>
<div class="r" style="left:1792px;top:908px;width:511px;height:34px;border:1.5px solid #acb3bb;background:#fff;"></div>
<div class="r" style="left:2306px;top:907px;width:37px;height:36px;border:1.5px solid #8e8e8e;background:#dadada;"></div>
<svg class="r" style="left:2316px;top:922.0px" width="18" height="6" viewBox="0 0 18 6"><circle cx="2.5" cy="3" r="1.9" stroke="#222" stroke-width="1.2" fill="none"/><circle cx="9" cy="3" r="1.9" stroke="#222" stroke-width="1.2" fill="none"/><circle cx="15.5" cy="3" r="1.9" stroke="#222" stroke-width="1.2" fill="none"/></svg>
<div class="r" style="left:2346px;top:907px;width:38px;height:36px;border:1.5px solid #d2d2d2;background:#f2f2f2;"></div>
<svg class="r" style="left:2355px;top:915.0px" width="20" height="20" viewBox="0 0 20 20"><path d="M0 0 L20 20 M20 0 L0 20" stroke="#333" stroke-width="1.3"/></svg>
<div class="r" style="left:1550px;top:616px;width:838px;height:45px;border:3px solid #e8413e;box-shadow:1px 2px 3px rgba(0,0,0,0.25);"></div>
<div class="r" style="left:2139px;top:1469px;width:120px;height:30px;border:1.5px solid #adadad;background:#f4f4f4;"></div>
<div class="t" style="left:1699.0px;width:1000px;text-align:center;top:1474.7px;font-size:18px;line-height:20.11px;color:#8a8a8a;font-weight:400;">Undo</div>
<div class="r" style="left:2274px;top:1469px;width:120px;height:30px;border:1.5px solid #adadad;background:#f4f4f4;"></div>
<div class="t" style="left:1834.0px;width:1000px;text-align:center;top:1474.7px;font-size:18px;line-height:20.11px;color:#8a8a8a;font-weight:400;">Save</div>
<div class="r" style="left:1553px;top:680px;width:505px;height:439px;border:1px solid #9a9a9a;background:#f0f0f0;box-shadow:2px 3px 8px rgba(0,0,0,0.18);"></div>
<div class="r" style="left:1554px;top:681px;width:503px;height:43px;background:#fff;"></div>
<div class="r" style="left:1571px;top:695px;width:19px;height:19px;background:#8e8e8e;"></div>
<div class="r" style="left:1565px;top:689px;width:19px;height:19px;background:#e4502b;"></div>
<svg class="r" style="left:1571px;top:695px" width="13" height="13" viewBox="0 0 13 13"><path d="M0 13 Q0 0 13 0 Q13 13 0 13 Z" fill="#8a2a14"/></svg>
<div class="t" style="left:1594.5px;top:693.8px;font-size:17.4px;line-height:19.44px;color:#a0a0a0;font-weight:400;">Select Sub Item Categories</div>
<div class="r" style="left:1875px;top:701px;width:16px;height:1.5px;background:#999;"></div>
<div class="r" style="left:1944px;top:694px;width:15px;height:15px;border:1.5px solid #999;"></div>
<svg class="r" style="left:2014px;top:694px" width="16" height="16" viewBox="0 0 16 16"><path d="M0 0 L16 16 M16 0 L0 16" stroke="#999" stroke-width="1.3"/></svg>
<div class="r" style="left:1562px;top:732px;width:488px;height:334px;border:1px solid #b0b0b0;background:#fff;"></div>
<div class="r" style="left:1577px;top:742.6px;width:20px;height:20.0px;border:1.5px solid #333;background:#fff;"></div>
<div class="t" style="left:1607.0px;top:744.3px;font-size:18px;line-height:20.11px;color:#333;font-weight:400;">Door hardware combinations</div>
<div class="r" style="left:1577px;top:778.5px;width:20px;height:20.0px;border:1.5px solid #333;background:#fff;"></div>
<div class="t" style="left:1607.0px;top:780.2px;font-size:18px;line-height:20.11px;color:#333;font-weight:400;">Door hardware parts 1</div>
<div class="r" style="left:1577px;top:814.4px;width:20px;height:20.0px;border:1.5px solid #333;background:#fff;"></div>
<div class="t" style="left:1607.0px;top:816.1px;font-size:18px;line-height:20.11px;color:#333;font-weight:400;">Door hardware parts 2</div>
<div class="r" style="left:1577px;top:850.3px;width:20px;height:20.0px;border:1.5px solid #333;background:#fff;"></div>
<div class="t" style="left:1607.0px;top:852.0px;font-size:18px;line-height:20.11px;color:#333;font-weight:400;">Fabric</div>
<div class="r" style="left:1556px;top:867px;width:295px;height:161px;border:3px solid #e8413e;background:#fff;box-shadow:1px 2px 3px rgba(0,0,0,0.25);"></div>
<div class="r" style="left:1565px;top:950px;width:482px;height:36px;background:#f5f5f5;border-top:1px solid #e3e3e3;border-bottom:1px solid #e3e3e3;"></div>
<div class="r" style="left:1556px;top:950px;width:295px;height:1px;background:#e8413e;opacity:0;"></div>
<div class="r" style="left:1577px;top:886.0px;width:20px;height:20.0px;border:1.5px solid #333;background:#fff;"></div>
<svg class="r" style="left:1580px;top:889.0px" width="14" height="14" viewBox="0 0 14 14"><path d="M1.5 7 L5.5 11.5 L12.5 1.5" stroke="#111" stroke-width="2.4" fill="none"/></svg>
<div class="t" style="left:1607.0px;top:887.7px;font-size:18px;line-height:20.11px;color:#333;font-weight:400;">Door Frame</div>
<div class="r" style="left:1577px;top:921.9px;width:20px;height:20.0px;border:1.5px solid #333;background:#fff;"></div>
<svg class="r" style="left:1580px;top:924.9px" width="14" height="14" viewBox="0 0 14 14"><path d="M1.5 7 L5.5 11.5 L12.5 1.5" stroke="#111" stroke-width="2.4" fill="none"/></svg>
<div class="t" style="left:1607.0px;top:923.6px;font-size:18px;line-height:20.11px;color:#333;font-weight:400;">Door Glazing</div>
<div class="r" style="left:1577px;top:957.8px;width:20px;height:20.0px;border:1.5px solid #333;background:#fff;"></div>
<svg class="r" style="left:1580px;top:960.8px" width="14" height="14" viewBox="0 0 14 14"><path d="M1.5 7 L5.5 11.5 L12.5 1.5" stroke="#111" stroke-width="2.4" fill="none"/></svg>
<div class="t" style="left:1607.0px;top:959.5px;font-size:18px;line-height:20.11px;color:#333;font-weight:400;">Lockset/Latchset</div>
<div class="r" style="left:1577px;top:993.7px;width:20px;height:20.0px;border:1.5px solid #333;background:#fff;"></div>
<svg class="r" style="left:1580px;top:996.7px" width="14" height="14" viewBox="0 0 14 14"><path d="M1.5 7 L5.5 11.5 L12.5 1.5" stroke="#111" stroke-width="2.4" fill="none"/></svg>
<div class="t" style="left:1607.0px;top:995.4px;font-size:18px;line-height:20.11px;color:#333;font-weight:400;">Door exit devices</div>
<div class="r" style="left:1556px;top:867px;width:295px;height:161px;border:3px solid #e8413e;"></div>
<div class="r" style="left:1795px;top:1081px;width:120px;height:30px;background:#0c9ddc;border:1.5px solid #2c6f9c;"></div>
<div class="t" style="left:1355.0px;width:1000px;text-align:center;top:1086.7px;font-size:18px;line-height:20.11px;color:#fff;font-weight:400;">Ok</div>
<div class="r" style="left:1930px;top:1081px;width:120px;height:30px;background:#dddddd;border:1.5px solid #9d9d9d;"></div>
<div class="t" style="left:1490.0px;width:1000px;text-align:center;top:1086.7px;font-size:18px;line-height:20.11px;color:#333;font-weight:400;">Cancel</div>
</body></html>
